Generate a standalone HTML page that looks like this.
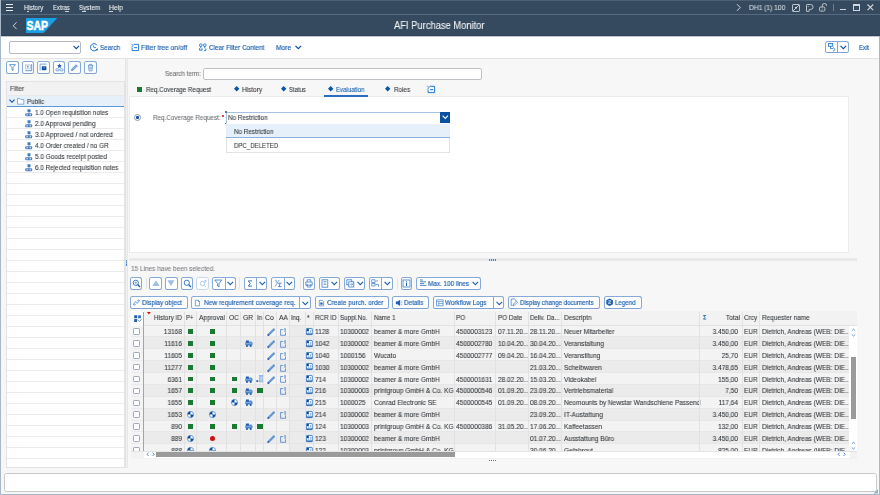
<!DOCTYPE html><html><head><meta charset="utf-8"><style>
*{margin:0;padding:0;box-sizing:border-box}
html,body{width:880px;height:495px;overflow:hidden}
body{position:relative;background:#f7f7f7;font-family:"Liberation Sans",sans-serif;color:#32363a;font-size:7px;line-height:1}
.a{position:absolute}
.t{position:absolute;white-space:nowrap;line-height:1;will-change:transform;-webkit-text-stroke:0.08px currentColor}
.btn{position:absolute;background:#fff;border:1px solid #86aad8;border-bottom:1.4px solid #7ea2d2;border-radius:2.5px}
.sep{position:absolute;width:1px;background:#e4e4e4}
.g{position:absolute;background:#1a7a32}
svg{position:absolute;overflow:visible}
</style></head><body>
<div class="a" style="left:0;top:0;width:880px;height:36px;background:#354a5f"></div>
<div class="a" style="left:0;top:14px;width:880px;height:1px;background:#566b7f"></div>
<div class="a" style="left:0;top:0;width:880px;height:1px;background:#4b5f73"></div>
<div class="a" style="left:0;top:35px;width:880px;height:1px;background:#2f4255"></div>
<div class="a" style="left:6px;top:4.3px;width:7.3px;height:1.2px;background:#e6eaee"></div>
<div class="a" style="left:6px;top:6.9px;width:7.3px;height:1.2px;background:#e6eaee"></div>
<div class="a" style="left:6px;top:9.5px;width:7.3px;height:1.2px;background:#e6eaee"></div>
<div class="t" style="left:23.6px;transform-origin:0 50%;top:5.00px;font-size:6.9px;color:#eef1f4;transform:scaleX(0.8996);">History</div>
<div class="t" style="left:52.7px;transform-origin:0 50%;top:5.00px;font-size:6.9px;color:#eef1f4;transform:scaleX(0.8602);">Extras</div>
<div class="t" style="left:79px;transform-origin:0 50%;top:5.00px;font-size:6.9px;color:#eef1f4;transform:scaleX(0.9180);">System</div>
<div class="t" style="left:109px;transform-origin:0 50%;top:5.00px;font-size:6.9px;color:#eef1f4;transform:scaleX(0.9879);">Help</div>
<div class="a" style="left:26.8px;top:11px;width:1.8px;height:0.8px;background:#c8d0d8"></div>
<div class="a" style="left:65.2px;top:11px;width:4.2px;height:0.8px;background:#c8d0d8"></div>
<div class="a" style="left:82px;top:11px;width:3.7px;height:0.8px;background:#c8d0d8"></div>
<div class="a" style="left:109.2px;top:11px;width:3.6px;height:0.8px;background:#c8d0d8"></div>
<svg style="left:736px;top:3px" width="6" height="9"><path d="M1 1.2 L4.2 4.5 L1 7.8" stroke="#cfd6de" stroke-width="1" fill="none"/></svg>
<div class="t" style="left:748.7px;transform-origin:0 50%;top:5.00px;font-size:6.9px;color:#d8dee4;transform:scaleX(0.9668);">DH1 (1) 100</div>
<svg style="left:792px;top:3.5px" width="9" height="9"><rect x="0.5" y="0.5" width="7" height="7" rx="0.6" stroke="#c9d1da" fill="none" stroke-width="0.9"/><path d="M1 7 L7 1" stroke="#c9d1da" stroke-width="0.9"/><path d="M2.6 3.2 L4.9 2.7 L4.4 5 Z" fill="#e3e8ed"/></svg>
<svg style="left:805.7px;top:3.5px" width="9" height="9"><path d="M0.5 7.1 V1.2 Q0.5 0.5 1.2 0.5 H4.6 Q7.1 0.5 7.1 3.1 Q7.1 5.4 4.6 5.4 H3.2 V7.1 Q3.2 7.4 2.9 7.4 H0.8 Q0.5 7.4 0.5 7.1 Z" stroke="#c9d1da" fill="none" stroke-width="0.9"/><circle cx="2.2" cy="2.4" r="0.5" fill="#c9d1da"/></svg>
<svg style="left:818.6px;top:2.8px" width="10" height="10"><rect x="0.5" y="4" width="5.4" height="4.1" rx="1.2" stroke="#c9d1da" fill="none" stroke-width="0.9"/><path d="M3.3 4 V2.4 Q3.3 0.5 5.4 0.5 Q7.5 0.5 7.5 2.4 V3" stroke="#c9d1da" fill="none" stroke-width="0.9"/><circle cx="3.2" cy="6" r="0.5" fill="#c9d1da"/></svg>
<div class="a" style="left:833px;top:4px;width:1px;height:6.5px;background:#6d8194"></div>
<div class="a" style="left:839.5px;top:9px;width:6.8px;height:1.3px;background:#cfd6de"></div>
<div class="a" style="left:853px;top:3.5px;width:7px;height:7px;border:1px solid #cfd6de;border-top-width:2px"></div>
<svg style="left:867px;top:4px" width="7" height="7"><path d="M0.5 0.5 L6.2 6.2 M6.2 0.5 L0.5 6.2" stroke="#cfd6de" stroke-width="1.1"/></svg>
<svg style="left:12px;top:22px" width="6" height="8"><path d="M4.6 0.3 L1.2 3.7 L4.6 7.1" stroke="#cfd6de" stroke-width="1" fill="none"/></svg>
<svg style="left:25.8px;top:18px" width="32" height="15"><path d="M0 0 H31.3 L17.6 15 H0 Z" fill="#1aa0e2"/><text x="0.6" y="12.25" font-family="Liberation Sans" font-weight="bold" font-size="12.9" fill="#fff" stroke="#fff" stroke-width="0.55" textLength="21.4" lengthAdjust="spacingAndGlyphs">SAP</text></svg>
<div class="t" style="left:393.9px;transform-origin:0 50%;top:21.00px;font-size:10px;color:#f3f5f7;transform:scaleX(0.9367);">AFI Purchase Monitor</div>
<div class="a" style="left:1px;top:36px;width:877.5px;height:23px;background:#fff;border-bottom:1px solid #e3e3e3"></div>
<div class="a" style="left:0;top:36px;width:880px;height:1px;background:#c3cad1"></div>
<div class="a" style="left:9px;top:41.2px;width:72px;height:12.6px;background:#fff;border:1px solid #b5b9bd;border-radius:2px"></div>
<svg style="left:72.6px;top:45.3px" width="7" height="5"><path d="M0.5 0.8 L3.3 3.7 L6.1 0.8" stroke="#0a4fa0" stroke-width="1.1" fill="none"/></svg>
<svg style="left:89.5px;top:43px" width="9" height="9"><path d="M7.1 2.3 A3.6 3.6 0 1 0 7.1 6.3" stroke="#0a6ed1" stroke-width="0.95" fill="none"/><path d="M7.9 5.2 L7.6 7.4 L5.6 6.9 Z" fill="#0a4fa0"/><path d="M3.2 2.4 L4.1 4.6 L5.9 4.6" stroke="#0a6ed1" stroke-width="0.85" fill="none"/></svg>
<div class="t" style="left:99.8px;transform-origin:0 50%;top:44.00px;font-size:7.2px;color:#1a5eae;transform:scaleX(0.8823);-webkit-text-stroke:0.16px currentColor;">Search</div>
<svg style="left:131px;top:43px" width="9" height="9"><path d="M0.5 0.9 L1.9 2.6 L0.5 4.3" stroke="#0a6ed1" stroke-width="0.85" fill="none"/><path d="M2.6 1.3 H7.6 V7.6 H1.1 V4.7 M3.1 4.6 H6" stroke="#0a6ed1" stroke-width="0.9" fill="none"/></svg>
<div class="t" style="left:141px;transform-origin:0 50%;top:44.00px;font-size:7.2px;color:#1a5eae;transform:scaleX(0.9180);-webkit-text-stroke:0.16px currentColor;">Filter tree on/off</div>
<svg style="left:198.5px;top:43px" width="9" height="9"><rect x="0.6" y="1" width="2.4" height="2.4" rx="0.6" stroke="#0a6ed1" stroke-width="0.85" fill="none"/><rect x="4.6" y="1" width="2.4" height="2.4" rx="0.6" stroke="#0a6ed1" stroke-width="0.85" fill="none"/><path d="M1.8 3.4 V5.2 M0.6 5.2 V7.2 H3 V5.2 M5.8 3.4 V5.2 M6.8 5.4 V7.6 H5" stroke="#0a6ed1" stroke-width="0.85" fill="none"/></svg>
<div class="t" style="left:208.6px;transform-origin:0 50%;top:44.00px;font-size:7.2px;color:#1a5eae;transform:scaleX(0.8904);-webkit-text-stroke:0.16px currentColor;">Clear Filter Content</div>
<div class="t" style="left:276px;transform-origin:0 50%;top:44.00px;font-size:7.2px;color:#1a5eae;transform:scaleX(0.9213);-webkit-text-stroke:0.16px currentColor;">More</div>
<svg style="left:294.5px;top:45px" width="7" height="5"><path d="M0.5 0.8 L3.3 3.7 L6.1 0.8" stroke="#0a4fa0" stroke-width="1.2" fill="none"/></svg>
<div class="btn" style="left:825px;top:41.2px;width:24px;height:12.2px"></div>
<div class="a" style="left:837px;top:41.7px;width:1px;height:11.2px;background:#7aa5d8"></div>
<svg style="left:827.5px;top:43px" width="9" height="9"><rect x="0.5" y="0.6" width="4.2" height="2.6" stroke="#0a6ed1" stroke-width="0.8" fill="none"/><path d="M2.5 3.2 V5.6 H5 M5 4.4 L7.2 6.5 L5 8.3" stroke="#0a6ed1" stroke-width="0.8" fill="none"/></svg>
<svg style="left:840px;top:45px" width="7" height="5"><path d="M0.5 0.8 L3.3 3.7 L6.1 0.8" stroke="#0a4fa0" stroke-width="1.1" fill="none"/></svg>
<div class="t" style="left:858.7px;transform-origin:0 50%;top:44.00px;font-size:7.2px;color:#1a5eae;transform:scaleX(0.8261);-webkit-text-stroke:0.16px currentColor;">Exit</div>
<div class="a" style="left:0;top:0;width:1px;height:495px;background:#a9b8c8"></div>
<div class="a" style="left:878.6px;top:36px;width:1.4px;height:459px;background:#a9b8c8"></div>
<div class="a" style="left:0;top:493.6px;width:880px;height:1.4px;background:#a9b8c8"></div>
<div class="btn" style="left:6px;top:61px;width:12.5px;height:12.7px"></div>
<div class="btn" style="left:21.9px;top:61px;width:12.5px;height:12.7px"></div>
<div class="btn" style="left:37.4px;top:61px;width:12.5px;height:12.7px"></div>
<div class="btn" style="left:52.9px;top:61px;width:12.5px;height:12.7px"></div>
<div class="btn" style="left:68.4px;top:61px;width:12.5px;height:12.7px"></div>
<div class="btn" style="left:84.2px;top:61px;width:12.5px;height:12.7px"></div>
<svg style="left:7.8px;top:62.8px" width="9" height="9"><path d="M1.5 1.6 H7.5 L5 4.6 V7.4 L4 6.8 V4.6 Z" stroke="#3a7cc8" stroke-width="0.75" fill="none"/></svg>
<svg style="left:23.7px;top:62.8px" width="9" height="9"><path d="M7.7 1.1 V7.7 H1.3" stroke="#3a7cc8" stroke-width="0.8" fill="none"/><rect x="1.3" y="1.9" width="5" height="4" stroke="#8db0dc" stroke-width="0.6" fill="none"/><path d="M3.8 2.8 V5 M3 3.6 L3.8 2.8 L4.6 3.6" stroke="#1d5eae" stroke-width="0.6" fill="none"/></svg>
<svg style="left:39.199999999999996px;top:62.8px" width="9" height="9"><path d="M1.1 7.7 V1.1 H7.6" stroke="#5a8fd0" stroke-width="0.8" fill="none"/><rect x="2.8" y="3.3" width="4.6" height="3.9" rx="0.4" fill="#0a4fa0"/><path d="M4.3 4.6 H5.9 L5.1 5.5 Z" fill="#fff"/></svg>
<svg style="left:54.699999999999996px;top:62.8px" width="9" height="9"><path d="M4.5 0.6 L5.2 2.1 L6.8 2.3 L5.6 3.4 L5.9 5 L4.5 4.2 L3.1 5 L3.4 3.4 L2.2 2.3 L3.8 2.1 Z" fill="#1d5eae"/><rect x="0.9" y="5.9" width="3" height="2" rx="0.5" stroke="#3a7cc8" stroke-width="0.65" fill="none"/><rect x="5.1" y="5.9" width="3" height="2" rx="0.5" stroke="#3a7cc8" stroke-width="0.65" fill="none"/></svg>
<svg style="left:70.2px;top:62.8px" width="9" height="9"><path d="M1.5 7.6 L2 5.8 L6 1.8 L7.3 3.1 L3.3 7.1 Z" stroke="#3a7cc8" stroke-width="0.75" fill="#9dbde4"/></svg>
<svg style="left:86.0px;top:62.8px" width="9" height="9"><path d="M1.8 2.3 H7.2 M3.6 2.3 V1.3 H5.4 V2.3 M2.5 2.3 L3 7.9 H6 L6.5 2.3 M3.9 3.6 V6.6 M5.1 3.6 V6.6" stroke="#3a7cc8" stroke-width="0.65" fill="none"/></svg>
<div class="a" style="left:6.3px;top:81.2px;width:118.7px;height:386.8px;background:#fff;border:1px solid #e3e3e3"></div>
<div class="a" style="left:124.9px;top:59px;width:3.4px;height:409px;background:#eef0f1;border-left:1px solid #e3e3e3;border-right:1px solid #e8e8e8"></div>
<div class="a" style="left:7.1px;top:81.7px;width:117.4px;height:13.9px;background:#f2f2f2;border-bottom:1px solid #e8e8e8"></div>
<div class="t" style="left:9.9px;transform-origin:0 50%;top:86.00px;font-size:6.9px;color:#3e4246;transform:scaleX(0.9208);">Filter</div>
<div class="a" style="left:7.1px;top:95.6px;width:117.4px;height:11.2px;background:#e5f0fa;border-bottom:1px solid #5e96d2"></div>
<svg style="left:8.9px;top:99px" width="7" height="5"><path d="M0.5 0.7 L3 3.3 L5.5 0.7" stroke="#0a4fa0" stroke-width="1.1" fill="none"/></svg>
<svg style="left:17px;top:98px" width="8" height="7"><path d="M0.5 0.5 H3 L3.8 1.5 H6.8 V6.2 H0.5 Z" stroke="#6d9fd6" stroke-width="0.8" fill="#fafcff"/></svg>
<div class="t" style="left:26.6px;transform-origin:0 50%;top:99.00px;font-size:6.9px;color:#32363a;transform:scaleX(0.9105);">Public</div>
<div class="a" style="left:7.1px;top:117px;width:117.4px;height:1px;background:#ebebeb"></div>
<div class="a" style="left:7.1px;top:128px;width:117.4px;height:1px;background:#ebebeb"></div>
<div class="a" style="left:7.1px;top:139px;width:117.4px;height:1px;background:#ebebeb"></div>
<div class="a" style="left:7.1px;top:150px;width:117.4px;height:1px;background:#ebebeb"></div>
<div class="a" style="left:7.1px;top:161px;width:117.4px;height:1px;background:#ebebeb"></div>
<div class="a" style="left:7.1px;top:172px;width:117.4px;height:1px;background:#ebebeb"></div>
<div class="a" style="left:7.1px;top:183px;width:117.4px;height:1px;background:#ebebeb"></div>
<div class="a" style="left:7.1px;top:194px;width:117.4px;height:1px;background:#ebebeb"></div>
<div class="a" style="left:7.1px;top:205px;width:117.4px;height:1px;background:#ebebeb"></div>
<div class="a" style="left:7.1px;top:216px;width:117.4px;height:1px;background:#ebebeb"></div>
<div class="a" style="left:7.1px;top:227px;width:117.4px;height:1px;background:#ebebeb"></div>
<div class="a" style="left:7.1px;top:238px;width:117.4px;height:1px;background:#ebebeb"></div>
<div class="a" style="left:7.1px;top:249px;width:117.4px;height:1px;background:#ebebeb"></div>
<div class="a" style="left:7.1px;top:260px;width:117.4px;height:1px;background:#ebebeb"></div>
<div class="a" style="left:7.1px;top:271px;width:117.4px;height:1px;background:#ebebeb"></div>
<div class="a" style="left:7.1px;top:282px;width:117.4px;height:1px;background:#ebebeb"></div>
<div class="a" style="left:7.1px;top:293px;width:117.4px;height:1px;background:#ebebeb"></div>
<div class="a" style="left:7.1px;top:304px;width:117.4px;height:1px;background:#ebebeb"></div>
<div class="a" style="left:7.1px;top:315px;width:117.4px;height:1px;background:#ebebeb"></div>
<div class="a" style="left:7.1px;top:326px;width:117.4px;height:1px;background:#ebebeb"></div>
<div class="a" style="left:7.1px;top:337px;width:117.4px;height:1px;background:#ebebeb"></div>
<div class="a" style="left:7.1px;top:348px;width:117.4px;height:1px;background:#ebebeb"></div>
<div class="a" style="left:7.1px;top:359px;width:117.4px;height:1px;background:#ebebeb"></div>
<div class="a" style="left:7.1px;top:370px;width:117.4px;height:1px;background:#ebebeb"></div>
<div class="a" style="left:7.1px;top:381px;width:117.4px;height:1px;background:#ebebeb"></div>
<div class="a" style="left:7.1px;top:392px;width:117.4px;height:1px;background:#ebebeb"></div>
<div class="a" style="left:7.1px;top:403px;width:117.4px;height:1px;background:#ebebeb"></div>
<div class="a" style="left:7.1px;top:414px;width:117.4px;height:1px;background:#ebebeb"></div>
<div class="a" style="left:7.1px;top:425px;width:117.4px;height:1px;background:#ebebeb"></div>
<div class="a" style="left:7.1px;top:436px;width:117.4px;height:1px;background:#ebebeb"></div>
<div class="a" style="left:7.1px;top:447px;width:117.4px;height:1px;background:#ebebeb"></div>
<div class="a" style="left:7.1px;top:458px;width:117.4px;height:1px;background:#ebebeb"></div>
<svg style="left:25px;top:108.89999999999999px" width="8" height="8"><path d="M2.5 0.2 H5.5 V2.3 L4 3.7 L2.5 2.3 Z" fill="#3d7bc6"/><path d="M4 3.5 V4.5" stroke="#3d7bc6" stroke-width="0.7"/><rect x="0.2" y="4.3" width="7" height="3" rx="1" fill="#4a82c4"/><rect x="1.4" y="5.3" width="1.3" height="1" fill="#fff"/><rect x="4.7" y="5.3" width="1.3" height="1" fill="#fff"/></svg>
<div class="t" style="left:34.5px;transform-origin:0 50%;top:110.00px;font-size:6.9px;color:#32363a;transform:scaleX(0.9098);">1.0 Open requisition notes</div>
<svg style="left:25px;top:119.89999999999999px" width="8" height="8"><path d="M2.5 0.2 H5.5 V2.3 L4 3.7 L2.5 2.3 Z" fill="#3d7bc6"/><path d="M4 3.5 V4.5" stroke="#3d7bc6" stroke-width="0.7"/><rect x="0.2" y="4.3" width="7" height="3" rx="1" fill="#4a82c4"/><rect x="1.4" y="5.3" width="1.3" height="1" fill="#fff"/><rect x="4.7" y="5.3" width="1.3" height="1" fill="#fff"/></svg>
<div class="t" style="left:34.5px;transform-origin:0 50%;top:121.00px;font-size:6.9px;color:#32363a;transform:scaleX(0.9359);">2.0 Approval pending</div>
<svg style="left:25px;top:130.9px" width="8" height="8"><path d="M2.5 0.2 H5.5 V2.3 L4 3.7 L2.5 2.3 Z" fill="#3d7bc6"/><path d="M4 3.5 V4.5" stroke="#3d7bc6" stroke-width="0.7"/><rect x="0.2" y="4.3" width="7" height="3" rx="1" fill="#4a82c4"/><rect x="1.4" y="5.3" width="1.3" height="1" fill="#fff"/><rect x="4.7" y="5.3" width="1.3" height="1" fill="#fff"/></svg>
<div class="t" style="left:34.5px;transform-origin:0 50%;top:132.00px;font-size:6.9px;color:#32363a;transform:scaleX(0.9533);">3.0 Approved / not ordered</div>
<svg style="left:25px;top:141.9px" width="8" height="8"><path d="M2.5 0.2 H5.5 V2.3 L4 3.7 L2.5 2.3 Z" fill="#3d7bc6"/><path d="M4 3.5 V4.5" stroke="#3d7bc6" stroke-width="0.7"/><rect x="0.2" y="4.3" width="7" height="3" rx="1" fill="#4a82c4"/><rect x="1.4" y="5.3" width="1.3" height="1" fill="#fff"/><rect x="4.7" y="5.3" width="1.3" height="1" fill="#fff"/></svg>
<div class="t" style="left:34.5px;transform-origin:0 50%;top:143.00px;font-size:6.9px;color:#32363a;transform:scaleX(0.9250);">4.0 Order created / no GR</div>
<svg style="left:25px;top:152.9px" width="8" height="8"><path d="M2.5 0.2 H5.5 V2.3 L4 3.7 L2.5 2.3 Z" fill="#3d7bc6"/><path d="M4 3.5 V4.5" stroke="#3d7bc6" stroke-width="0.7"/><rect x="0.2" y="4.3" width="7" height="3" rx="1" fill="#4a82c4"/><rect x="1.4" y="5.3" width="1.3" height="1" fill="#fff"/><rect x="4.7" y="5.3" width="1.3" height="1" fill="#fff"/></svg>
<div class="t" style="left:34.5px;transform-origin:0 50%;top:154.00px;font-size:6.9px;color:#32363a;transform:scaleX(0.9338);">5.0 Goods receipt posted</div>
<svg style="left:25px;top:163.9px" width="8" height="8"><path d="M2.5 0.2 H5.5 V2.3 L4 3.7 L2.5 2.3 Z" fill="#3d7bc6"/><path d="M4 3.5 V4.5" stroke="#3d7bc6" stroke-width="0.7"/><rect x="0.2" y="4.3" width="7" height="3" rx="1" fill="#4a82c4"/><rect x="1.4" y="5.3" width="1.3" height="1" fill="#fff"/><rect x="4.7" y="5.3" width="1.3" height="1" fill="#fff"/></svg>
<div class="t" style="left:34.5px;transform-origin:0 50%;top:165.00px;font-size:6.9px;color:#32363a;transform:scaleX(0.9185);">6.0 Rejected requisition notes</div>
<div class="a" style="left:129.3px;top:96px;width:719.6px;height:156.5px;background:#fff;border:1px solid #ebebeb"></div>
<div class="t" style="left:164.7px;transform-origin:0 50%;top:71.00px;font-size:6.9px;color:#6a6d70;transform:scaleX(0.9099);">Search term:</div>
<div class="a" style="left:203.2px;top:67.6px;width:278.6px;height:12px;background:#fff;border:1px solid #bfc3c7;border-radius:2px"></div>
<div class="a" style="left:136.5px;top:86.8px;width:5.6px;height:5px;background:#1a7a32"></div>
<div class="t" style="left:145.6px;transform-origin:0 50%;top:87.00px;font-size:6.9px;color:#32363a;transform:scaleX(0.9054);">Req.Coverage Request</div>
<svg style="left:233.55px;top:86.4px" width="6" height="6"><path d="M2.7 0 L5.4 2.7 L2.7 5.4 L0 2.7 Z" fill="#0a55a8"/></svg>
<div class="t" style="left:241.95px;transform-origin:0 50%;top:87.00px;font-size:6.9px;color:#32363a;transform:scaleX(0.9369);">History</div>
<svg style="left:281.05px;top:86.4px" width="6" height="6"><path d="M2.7 0 L5.4 2.7 L2.7 5.4 L0 2.7 Z" fill="#0a55a8"/></svg>
<div class="t" style="left:289.45px;transform-origin:0 50%;top:87.00px;font-size:6.9px;color:#32363a;transform:scaleX(0.8620);">Status</div>
<svg style="left:328.0px;top:86.4px" width="6" height="6"><path d="M2.7 0 L5.4 2.7 L2.7 5.4 L0 2.7 Z" fill="#0a55a8"/></svg>
<div class="t" style="left:336.4px;transform-origin:0 50%;top:87.00px;font-size:6.9px;color:#0b5cad;transform:scaleX(0.8854);">Evaluation</div>
<svg style="left:385.3px;top:86.4px" width="6" height="6"><path d="M2.7 0 L5.4 2.7 L2.7 5.4 L0 2.7 Z" fill="#0a55a8"/></svg>
<div class="t" style="left:393.7px;transform-origin:0 50%;top:87.00px;font-size:6.9px;color:#32363a;transform:scaleX(0.9191);">Roles</div>
<div class="a" style="left:323.8px;top:95.3px;width:44.2px;height:1.7px;background:#2b6cbc"></div>
<svg style="left:427px;top:85.3px" width="9" height="9"><path d="M0.5 0.9 L1.9 2.6 L0.5 4.3" stroke="#0a6ed1" stroke-width="0.85" fill="none"/><path d="M2.6 1.3 H7.6 V7.6 H1.1 V4.7 M3.1 4.6 H6" stroke="#0a6ed1" stroke-width="0.9" fill="none"/></svg>
<div class="a" style="left:133.6px;top:113.6px;width:7.4px;height:7.4px;border:0.8px solid #8a9bb0;border-radius:50%;background:#fff"></div>
<div class="a" style="left:136px;top:116px;width:2.6px;height:2.6px;border-radius:50%;background:#0a4fa0"></div>
<div class="t" style="left:153px;transform-origin:0 50%;top:115.00px;font-size:6.9px;color:#6a6d70;transform:scaleX(0.9143);">Req.Coverage Request:</div>
<div class="a" style="left:222.2px;top:115.4px;width:2px;height:1.8px;border-radius:40%;background:#d8202a"></div>
<div class="a" style="left:225.8px;top:111.6px;width:224px;height:12px;background:#fff;border:1.3px solid #a3c2e5;border-left-width:1px"></div>
<div class="a" style="left:225.3px;top:111.2px;width:1.6px;height:1.6px;background:#6a7580"></div>
<div class="a" style="left:225.3px;top:122.6px;width:1.6px;height:1.6px;background:#6a7580"></div>
<div class="t" style="left:228.3px;transform-origin:0 50%;top:115.00px;font-size:6.9px;color:#32363a;transform:scaleX(0.9149);">No Restriction</div>
<div class="a" style="left:440.4px;top:112.4px;width:9.4px;height:10.6px;background:#0a4fa0"></div>
<svg style="left:441.8px;top:115.3px" width="7" height="5"><path d="M0.6 0.7 L3.3 3.4 L6 0.7" stroke="#fff" stroke-width="1.1" fill="none"/></svg>
<div class="a" style="left:226.2px;top:123.4px;width:223.6px;height:30px;background:#fff;border:1px solid #e2e2e2;border-top:none"></div>
<div class="a" style="left:226.2px;top:123.5px;width:223.6px;height:14.6px;background:#e5f0fa;border-bottom:1.2px solid #8ab2de"></div>
<div class="t" style="left:233.7px;transform-origin:0 50%;top:129.00px;font-size:6.9px;color:#32363a;transform:scaleX(0.9126);">No Restriction</div>
<div class="t" style="left:233.7px;transform-origin:0 50%;top:143.00px;font-size:6.9px;color:#32363a;transform:scaleX(0.8810);">DPC_DELETED</div>
<div class="a" style="left:129.3px;top:258px;width:728px;height:3px;background:linear-gradient(#eceef0,#e4e6e8 50%,#eceef0)"></div>
<div class="a" style="left:488.8px;top:259px;width:7.4px;height:1.5px;background:repeating-linear-gradient(90deg,#4d86c9 0 1.3px,#c9d9ec 1.3px 2px)"></div>
<div class="a" style="left:125.8px;top:259.8px;width:1px;height:6.6px;background:repeating-linear-gradient(180deg,#4a84c8 0 1.4px,#9fbee2 1.4px 1.8px)"></div>
<div class="t" style="left:130.6px;transform-origin:0 50%;top:266.00px;font-size:6.9px;color:#7a7d80;transform:scaleX(0.9369);">15 Lines have been selected.</div>
<div class="btn" style="left:130.1px;top:277.3px;width:12px;height:12.5px"></div>
<svg style="left:132px;top:279.1px" width="9" height="9"><circle cx="3.8" cy="3.8" r="2.6" stroke="#3a7cc8" stroke-width="1" fill="none"/><path d="M5.6 5.6 L8 8" stroke="#1d5eae" stroke-width="1.4"/><path d="M2.6 3.8 H5 M3.8 2.6 V5" stroke="#3a7cc8" stroke-width="0.6"/></svg>
<div class="sep" style="left:145.8px;top:278px;height:11px"></div>
<div class="btn" style="left:149.4px;top:277.3px;width:12.3px;height:12.5px"></div>
<svg style="left:151.5px;top:279.3px" width="9" height="9"><path d="M4 1.3 L7.6 7 H0.4 Z" fill="#9dbfe6"/></svg>
<div class="btn" style="left:165.3px;top:277.3px;width:12.3px;height:12.5px"></div>
<svg style="left:167.4px;top:279.3px" width="9" height="9"><path d="M4 7 L7.6 1.3 H0.4 Z" fill="#9dbfe6"/></svg>
<div class="btn" style="left:181.1px;top:277.3px;width:12px;height:12.5px"></div>
<svg style="left:183px;top:279.1px" width="9" height="9"><circle cx="3.8" cy="3.8" r="2.6" stroke="#3a7cc8" stroke-width="1" fill="none"/><path d="M5.6 5.6 L8 8" stroke="#1d5eae" stroke-width="1.3"/></svg>
<div class="btn" style="left:196.4px;top:277.3px;width:12.3px;height:12.5px;border-color:#c3d6ec"></div>
<svg style="left:198.5px;top:279.1px" width="9" height="9"><circle cx="3.5" cy="4.5" r="2.2" stroke="#9dbfe6" stroke-width="0.8" fill="none"/><path d="M5 6 L7 8 M6.5 0.5 V3.5 M5 2 H8" stroke="#9dbfe6" stroke-width="0.7"/></svg>
<div class="btn" style="left:212.2px;top:277.3px;width:23.8px;height:12.5px"></div>
<div class="a" style="left:224.7px;top:277.8px;width:1px;height:11.5px;background:#86aad8"></div>
<svg style="left:214px;top:279.1px" width="9" height="9"><path d="M0.8 1 H7.8 L5 4.5 V8 L3.6 7 V4.5 Z" stroke="#3a7cc8" stroke-width="0.85" fill="none"/></svg>
<svg style="left:226.8px;top:281.3px" width="7" height="5"><path d="M0.5 0.8 L3.3 3.6 L6.1 0.8" stroke="#1d5eae" stroke-width="1.1" fill="none"/></svg>
<div class="sep" style="left:238.9px;top:278px;height:11px"></div>
<div class="btn" style="left:243.6px;top:277.3px;width:23.9px;height:12.5px"></div>
<div class="a" style="left:256.2px;top:277.8px;width:1px;height:11.5px;background:#86aad8"></div>
<svg style="left:246.2px;top:279.1px" width="9" height="9"><path d="M6 1.9 H2.3 L4.2 4.5 L2.3 7.1 H6" stroke="#1d5eae" stroke-width="0.85" fill="none"/></svg>
<svg style="left:258.6px;top:281.3px" width="7" height="5"><path d="M0.5 0.8 L3.3 3.6 L6.1 0.8" stroke="#1d5eae" stroke-width="1.1" fill="none"/></svg>
<div class="btn" style="left:271.3px;top:277.3px;width:24.2px;height:12.5px"></div>
<div class="a" style="left:283.6px;top:277.8px;width:1px;height:11.5px;background:#86aad8"></div>
<svg style="left:273.6px;top:279.1px" width="9" height="9"><path d="M1.2 1.2 H2.2 V3.6 M1 7.5 L5.2 1" stroke="#3a7cc8" stroke-width="0.7" fill="none"/><path d="M7.6 4.2 H4.6 L6 5.9 L4.6 7.6 H7.6" stroke="#1d5eae" stroke-width="0.75" fill="none"/></svg>
<svg style="left:286px;top:281.3px" width="7" height="5"><path d="M0.5 0.8 L3.3 3.6 L6.1 0.8" stroke="#1d5eae" stroke-width="1.1" fill="none"/></svg>
<div class="sep" style="left:299.6px;top:278px;height:11px"></div>
<div class="btn" style="left:303.3px;top:277.3px;width:11.3px;height:12.5px"></div>
<svg style="left:304.8px;top:279.1px" width="9" height="9"><path d="M2.2 2.8 V0.8 H5.8 V2.8 M0.8 3 H7.2 V6.2 H0.8 Z M2.2 5 V8 H5.8 V5" stroke="#3a7cc8" stroke-width="0.8" fill="none"/></svg>
<div class="btn" style="left:318.7px;top:277.3px;width:21.1px;height:12.5px"></div>
<svg style="left:320.5px;top:279.1px" width="9" height="9"><rect x="1" y="0.8" width="5.8" height="7.4" stroke="#3a7cc8" stroke-width="0.8" fill="none"/><path d="M2.5 2.5 H5.3 M2.5 4 H5.3 M2.5 5.5 H5.3" stroke="#3a7cc8" stroke-width="0.6"/></svg>
<svg style="left:331px;top:281.3px" width="7" height="5"><path d="M0.5 0.8 L3.3 3.6 L6.1 0.8" stroke="#1d5eae" stroke-width="1.1" fill="none"/></svg>
<div class="btn" style="left:343.7px;top:277.3px;width:21.5px;height:12.5px"></div>
<svg style="left:345.5px;top:279.1px" width="9" height="9"><rect x="0.8" y="0.8" width="5" height="5" stroke="#3a7cc8" stroke-width="0.8" fill="none"/><rect x="2.8" y="2.8" width="5" height="5.2" stroke="#3a7cc8" stroke-width="0.8" fill="#fff"/><path d="M4 5.3 H6.8 M5.5 4 L6.8 5.3 L5.5 6.6" stroke="#3a7cc8" stroke-width="0.6" fill="none"/></svg>
<svg style="left:356.5px;top:281.3px" width="7" height="5"><path d="M0.5 0.8 L3.3 3.6 L6.1 0.8" stroke="#1d5eae" stroke-width="1.1" fill="none"/></svg>
<div class="btn" style="left:369px;top:277.3px;width:23.5px;height:12.5px"></div>
<div class="a" style="left:381.2px;top:277.8px;width:1px;height:11.5px;background:#86aad8"></div>
<svg style="left:371px;top:279.1px" width="9" height="9"><rect x="0.8" y="0.8" width="3.2" height="2.6" stroke="#3a7cc8" stroke-width="0.7" fill="none"/><rect x="0.8" y="4.4" width="3.2" height="2.6" stroke="#3a7cc8" stroke-width="0.7" fill="none"/><path d="M4.5 2 H7 M4.5 5.5 H7.5 V7.8" stroke="#3a7cc8" stroke-width="0.7" fill="none"/></svg>
<svg style="left:383.6px;top:281.3px" width="7" height="5"><path d="M0.5 0.8 L3.3 3.6 L6.1 0.8" stroke="#1d5eae" stroke-width="1.1" fill="none"/></svg>
<div class="sep" style="left:396.7px;top:278px;height:11px"></div>
<div class="btn" style="left:400.5px;top:277.3px;width:11.9px;height:12.5px"></div>
<svg style="left:402px;top:279.1px" width="9" height="9"><rect x="1" y="1" width="7" height="7" stroke="#3a7cc8" stroke-width="0.8" fill="none"/><path d="M4.5 3.5 V7 M4.5 2 V2.6" stroke="#1d5eae" stroke-width="1"/></svg>
<div class="btn" style="left:416.3px;top:277.3px;width:65.1px;height:12.5px"></div>
<svg style="left:418.5px;top:279.1px" width="9" height="9"><path d="M1 1 H4 M1 2.8 H7 M1 4.6 H5 M1 6.4 H7.5" stroke="#3a7cc8" stroke-width="0.9"/></svg>
<div class="t" style="left:428px;transform-origin:0 50%;top:280.00px;font-size:7.2px;color:#1a5eae;transform:scaleX(0.8847);-webkit-text-stroke:0.16px currentColor;">Max. 100 lines</div>
<svg style="left:472px;top:281.3px" width="7" height="5"><path d="M0.5 0.8 L3.3 3.6 L6.1 0.8" stroke="#1d5eae" stroke-width="1.1" fill="none"/></svg>
<div class="btn" style="left:130px;top:296.3px;width:57.5px;height:12.7px"></div>
<svg style="left:132.5px;top:298.8px" width="9" height="9"><g transform="scale(0.86)"><path d="M3.4 5.6 L2.2 6.8 Q1 7.6 0.6 6.6 Q0.2 5.8 1.2 5 L3 3.4 Q3.8 3 4.2 3.8 M4.6 2.6 L5.8 1.4 Q6.8 0.6 7.3 1.5 Q7.6 2.3 6.8 3 L5 4.6 Q4.2 5 3.8 4.2" stroke="#3a7cc8" stroke-width="0.95" fill="none"/></g></svg>
<div class="t" style="left:141.9px;transform-origin:0 50%;top:299.00px;font-size:7.2px;color:#1a5eae;transform:scaleX(0.8939);-webkit-text-stroke:0.16px currentColor;">Display object</div>
<div class="btn" style="left:191.3px;top:296.3px;width:120px;height:12.7px"></div>
<div class="a" style="left:299.3px;top:296.8px;width:1px;height:11.7px;background:#86aad8"></div>
<svg style="left:194px;top:298.7px" width="9" height="9"><g transform="scale(0.86)"><path d="M1.5 1.5 H5 L6.5 3 V8 H1.5 Z M5 1.5 V3 H6.5" stroke="#3a7cc8" stroke-width="0.8" fill="none"/></g></svg>
<div class="t" style="left:203.8px;transform-origin:0 50%;top:299.00px;font-size:7.2px;color:#1a5eae;transform:scaleX(0.9097);-webkit-text-stroke:0.16px currentColor;">New requirement coverage req.</div>
<svg style="left:302px;top:300.5px" width="7" height="5"><path d="M0.5 0.8 L3.3 3.6 L6.1 0.8" stroke="#1d5eae" stroke-width="1.1" fill="none"/></svg>
<div class="btn" style="left:314.9px;top:296.3px;width:73.7px;height:12.7px"></div>
<svg style="left:317.5px;top:298.7px" width="9" height="9"><g transform="scale(0.86)"><path d="M1.5 1.5 H5 L6.5 3 V8 H1.5 Z" stroke="#3a7cc8" stroke-width="0.8" fill="none"/><rect x="2.7" y="4" width="2.6" height="2.6" fill="#1d5eae"/></g></svg>
<div class="t" style="left:327.2px;transform-origin:0 50%;top:299.00px;font-size:7.2px;color:#1a5eae;transform:scaleX(0.9049);-webkit-text-stroke:0.16px currentColor;">Create purch. order</div>
<div class="btn" style="left:392.3px;top:296.3px;width:36.8px;height:12.7px"></div>
<svg style="left:394.5px;top:298.7px" width="9" height="9"><g transform="scale(0.86)"><path d="M1 3 H3 L6 1 V8 L3 6 H1 Z" fill="#1d5eae"/><path d="M7 3 L8.5 2 M7 4.5 H8.5 M7 6 L8.5 7" stroke="#3a7cc8" stroke-width="0.6"/></g></svg>
<div class="t" style="left:404.4px;transform-origin:0 50%;top:299.00px;font-size:7.2px;color:#1a5eae;transform:scaleX(0.8733);-webkit-text-stroke:0.16px currentColor;">Details</div>
<div class="btn" style="left:433.4px;top:296.3px;width:70.7px;height:12.7px"></div>
<div class="a" style="left:492.7px;top:296.8px;width:1px;height:11.7px;background:#86aad8"></div>
<svg style="left:436px;top:298.7px" width="9" height="9"><g transform="scale(0.86)"><rect x="0.8" y="1" width="7.4" height="7" stroke="#3a7cc8" stroke-width="0.8" fill="none"/><path d="M0.8 3 H8.2 M3.2 3 V8 M3.2 5.3 H8.2" stroke="#3a7cc8" stroke-width="0.7"/></g></svg>
<div class="t" style="left:444.8px;transform-origin:0 50%;top:299.00px;font-size:7.2px;color:#1a5eae;transform:scaleX(0.8784);-webkit-text-stroke:0.16px currentColor;">Workflow Logs</div>
<svg style="left:495.5px;top:300.5px" width="7" height="5"><path d="M0.5 0.8 L3.3 3.6 L6.1 0.8" stroke="#1d5eae" stroke-width="1.1" fill="none"/></svg>
<div class="btn" style="left:508px;top:296.3px;width:91.6px;height:12.7px"></div>
<svg style="left:509.8px;top:298.1px" width="9" height="9"><path d="M1.2 7.4 V1 H4.6 L6 2.4 V3.4 M1.2 7.4 H2.4" stroke="#3a7cc8" stroke-width="0.75" fill="none"/><path d="M3 7.8 L3.4 6.1 L6.4 3.1 L7.5 4.2 L4.5 7.2 Z" stroke="#3a7cc8" stroke-width="0.75" fill="none"/></svg>
<div class="t" style="left:519.9px;transform-origin:0 50%;top:299.00px;font-size:7.2px;color:#1a5eae;transform:scaleX(0.8539);-webkit-text-stroke:0.16px currentColor;">Display change documents</div>
<div class="btn" style="left:603.7px;top:296.3px;width:37.9px;height:12.7px"></div>
<svg style="left:606.2px;top:298.1px" width="9" height="9"><path d="M3.6 0.5 L6.9 2.2 V6.2 L3.6 7.9 L0.3 6.2 V2.2 Z" fill="#1d5eae"/><path d="M2.3 2.9 H4.8 L2.3 5.3 H5" stroke="#fff" stroke-width="0.75" fill="none"/></svg>
<div class="t" style="left:615.4px;transform-origin:0 50%;top:299.00px;font-size:7.2px;color:#1a5eae;transform:scaleX(0.8547);-webkit-text-stroke:0.16px currentColor;">Legend</div>
<div class="a" style="left:130.6px;top:310.6px;width:726.6px;height:148.59999999999997px;background:#f2f2f2;border:1px solid #e0e0e0"></div>
<div class="a" style="left:131.1px;top:311.1px;width:725.6px;height:14.5px;background:#f2f2f2;border-bottom:1px solid #e2e2e2"></div>
<div class="a" style="left:131.1px;top:311.1px;width:12.5px;height:14.5px;background:#fff"></div>
<div class="a" style="left:0;top:0;width:849.4px;height:451.30px;overflow:hidden">
<div class="a" style="left:131.1px;top:325.60px;width:718.30px;height:11.875px;background:#f3f3f3;border-bottom:1px solid #e7e7e7"></div>
<div class="a" style="left:131.1px;top:325.60px;width:12.5px;height:11.875px;background:#f4f4f4;border-bottom:1px solid #ebebeb"></div>
<div class="a" style="left:133.30px;top:328.30px;width:6.9px;height:6.5px;background:#fbfdff;border:0.8px solid #a3a9bb;border-radius:1.2px"></div>
<div class="a" style="left:288.80px;top:325.60px;width:16.20px;height:11.875px;background:#ebebeb;border-bottom:1px solid #e4e4e4"></div>
<div class="t" style="left:-18.19999999999999px;width:200px;text-align:right;transform-origin:100% 50%;top:329.00px;font-size:6.9px;color:#32363a;transform:scaleX(0.9480);">13168</div>
<div class="g" style="left:188.10px;top:329.04px;width:5.4px;height:4.9px"></div>
<div class="g" style="left:209.70px;top:329.04px;width:5.4px;height:4.9px"></div>
<svg style="left:266.80px;top:328.14px" width="8" height="8"><path d="M1.3 6.9 L6.8 1.4" stroke="#5089cb" stroke-width="2.1" stroke-linecap="round"/><path d="M1.6 6.6 L6.6 1.6" stroke="#a9c6ea" stroke-width="0.45"/><circle cx="1.3" cy="6.9" r="0.75" fill="#1d5eae"/></svg>
<svg style="left:280.40px;top:327.94px" width="7" height="8"><path d="M2.8 1.5 H0.6 V7.3 H5.5 V4.4" stroke="#4a82c6" stroke-width="0.8" fill="none"/><path d="M5.1 0.2 V3.8" stroke="#4a82c6" stroke-width="1"/><path d="M3.4 1.6 L5 0.4" stroke="#7ea6d8" stroke-width="0.6"/></svg>
<svg style="left:305.70px;top:327.84px" width="8" height="8"><rect x="0.45" y="0.45" width="5.8" height="6.2" rx="0.5" fill="#fff" stroke="#3d7bc6" stroke-width="0.9"/><rect x="0.9" y="0.9" width="2" height="2.3" fill="#0a4fa0"/><rect x="2" y="3.6" width="1.2" height="1.2" fill="#7fa8da"/><rect x="4" y="2" width="1" height="2.8" fill="#9dbde4"/><rect x="0.3" y="5.4" width="6.1" height="1.3" fill="#2c66b0"/></svg>
<div class="t" style="left:315.2px;transform-origin:0 50%;top:329.00px;font-size:6.9px;color:#32363a;transform:scaleX(0.9480);">1128</div>
<div class="t" style="left:340.4px;transform-origin:0 50%;top:329.00px;font-size:6.9px;color:#32363a;transform:scaleX(0.9480);">10300002</div>
<div class="t" style="left:373.8px;transform-origin:0 50%;top:329.00px;font-size:6.9px;color:#32363a;transform:scaleX(0.9480);">beamer &amp; more GmbH</div>
<div class="t" style="left:456.4px;transform-origin:0 50%;top:329.00px;font-size:6.9px;color:#32363a;transform:scaleX(0.9480);">4500003123</div>
<div class="t" style="left:497.8px;transform-origin:0 50%;top:329.00px;font-size:6.9px;color:#32363a;transform:scaleX(0.9480);">07.11.20...</div>
<div class="t" style="left:530.3000000000001px;transform-origin:0 50%;top:329.00px;font-size:6.9px;color:#32363a;transform:scaleX(0.9480);">28.11.20...</div>
<div class="t" style="left:563.9000000000001px;transform-origin:0 50%;top:329.00px;font-size:6.9px;color:#32363a;transform:scaleX(0.9480);">Neuer Mitarbeiter</div>
<div class="t" style="left:537.9px;width:200px;text-align:right;transform-origin:100% 50%;top:329.00px;font-size:6.9px;color:#32363a;transform:scaleX(0.9480);">3.450,00</div>
<div class="t" style="left:744.0px;transform-origin:0 50%;top:329.00px;font-size:6.9px;color:#32363a;transform:scaleX(0.9480);">EUR</div>
<div class="t" style="left:761.8000000000001px;transform-origin:0 50%;top:329.00px;font-size:6.9px;color:#32363a;transform:scaleX(0.9480);">Dietrich, Andreas (WEB: DIE...</div>
<div class="a" style="left:131.1px;top:337.48px;width:718.30px;height:11.875px;background:#ebebeb;border-bottom:1px solid #e7e7e7"></div>
<div class="a" style="left:131.1px;top:337.48px;width:12.5px;height:11.875px;background:#f4f4f4;border-bottom:1px solid #ebebeb"></div>
<div class="a" style="left:133.30px;top:340.18px;width:6.9px;height:6.5px;background:#fbfdff;border:0.8px solid #a3a9bb;border-radius:1.2px"></div>
<div class="a" style="left:288.80px;top:337.48px;width:16.20px;height:11.875px;background:#ebebeb;border-bottom:1px solid #e4e4e4"></div>
<div class="t" style="left:-18.19999999999999px;width:200px;text-align:right;transform-origin:100% 50%;top:341.00px;font-size:6.9px;color:#32363a;transform:scaleX(0.9480);">11616</div>
<div class="g" style="left:188.10px;top:340.91px;width:5.4px;height:4.9px"></div>
<div class="g" style="left:209.70px;top:340.91px;width:5.4px;height:4.9px"></div>
<svg style="left:245.00px;top:340.11px" width="8" height="8"><rect x="0.3" y="1.9" width="7.2" height="3.5" rx="1" fill="#4a82c6"/><rect x="0.9" y="0.5" width="3" height="1.9" fill="#1d5eae"/><rect x="4.3" y="1" width="2.2" height="1.3" fill="#9fc0e6"/><path d="M1 3.6 H6.6" stroke="#b9d0ee" stroke-width="0.5"/><circle cx="2" cy="6" r="1.05" fill="#1d5eae"/><circle cx="5.7" cy="6" r="1.05" fill="#1d5eae"/></svg>
<svg style="left:266.80px;top:340.01px" width="8" height="8"><path d="M1.3 6.9 L6.8 1.4" stroke="#5089cb" stroke-width="2.1" stroke-linecap="round"/><path d="M1.6 6.6 L6.6 1.6" stroke="#a9c6ea" stroke-width="0.45"/><circle cx="1.3" cy="6.9" r="0.75" fill="#1d5eae"/></svg>
<svg style="left:280.40px;top:339.81px" width="7" height="8"><path d="M2.8 1.5 H0.6 V7.3 H5.5 V4.4" stroke="#4a82c6" stroke-width="0.8" fill="none"/><path d="M5.1 0.2 V3.8" stroke="#4a82c6" stroke-width="1"/><path d="M3.4 1.6 L5 0.4" stroke="#7ea6d8" stroke-width="0.6"/></svg>
<svg style="left:305.70px;top:339.71px" width="8" height="8"><rect x="0.45" y="0.45" width="5.8" height="6.2" rx="0.5" fill="#fff" stroke="#3d7bc6" stroke-width="0.9"/><rect x="0.9" y="0.9" width="2" height="2.3" fill="#0a4fa0"/><rect x="2" y="3.6" width="1.2" height="1.2" fill="#7fa8da"/><rect x="4" y="2" width="1" height="2.8" fill="#9dbde4"/><rect x="0.3" y="5.4" width="6.1" height="1.3" fill="#2c66b0"/></svg>
<div class="t" style="left:315.2px;transform-origin:0 50%;top:341.00px;font-size:6.9px;color:#32363a;transform:scaleX(0.9480);">1042</div>
<div class="t" style="left:340.4px;transform-origin:0 50%;top:341.00px;font-size:6.9px;color:#32363a;transform:scaleX(0.9480);">10300002</div>
<div class="t" style="left:373.8px;transform-origin:0 50%;top:341.00px;font-size:6.9px;color:#32363a;transform:scaleX(0.9480);">beamer &amp; more GmbH</div>
<div class="t" style="left:456.4px;transform-origin:0 50%;top:341.00px;font-size:6.9px;color:#32363a;transform:scaleX(0.9480);">4500002780</div>
<div class="t" style="left:497.8px;transform-origin:0 50%;top:341.00px;font-size:6.9px;color:#32363a;transform:scaleX(0.9480);">10.04.20...</div>
<div class="t" style="left:530.3000000000001px;transform-origin:0 50%;top:341.00px;font-size:6.9px;color:#32363a;transform:scaleX(0.9480);">30.04.20...</div>
<div class="t" style="left:563.9000000000001px;transform-origin:0 50%;top:341.00px;font-size:6.9px;color:#32363a;transform:scaleX(0.9480);">Veranstaltung</div>
<div class="t" style="left:537.9px;width:200px;text-align:right;transform-origin:100% 50%;top:341.00px;font-size:6.9px;color:#32363a;transform:scaleX(0.9480);">3.450,00</div>
<div class="t" style="left:744.0px;transform-origin:0 50%;top:341.00px;font-size:6.9px;color:#32363a;transform:scaleX(0.9480);">EUR</div>
<div class="t" style="left:761.8000000000001px;transform-origin:0 50%;top:341.00px;font-size:6.9px;color:#32363a;transform:scaleX(0.9480);">Dietrich, Andreas (WEB: DIE...</div>
<div class="a" style="left:131.1px;top:349.35px;width:718.30px;height:11.875px;background:#f3f3f3;border-bottom:1px solid #e7e7e7"></div>
<div class="a" style="left:131.1px;top:349.35px;width:12.5px;height:11.875px;background:#f4f4f4;border-bottom:1px solid #ebebeb"></div>
<div class="a" style="left:133.30px;top:352.05px;width:6.9px;height:6.5px;background:#fbfdff;border:0.8px solid #a3a9bb;border-radius:1.2px"></div>
<div class="a" style="left:288.80px;top:349.35px;width:16.20px;height:11.875px;background:#ebebeb;border-bottom:1px solid #e4e4e4"></div>
<div class="t" style="left:-18.19999999999999px;width:200px;text-align:right;transform-origin:100% 50%;top:353.00px;font-size:6.9px;color:#32363a;transform:scaleX(0.9480);">11605</div>
<div class="g" style="left:188.10px;top:352.79px;width:5.4px;height:4.9px"></div>
<div class="g" style="left:209.70px;top:352.79px;width:5.4px;height:4.9px"></div>
<svg style="left:266.80px;top:351.89px" width="8" height="8"><path d="M1.3 6.9 L6.8 1.4" stroke="#5089cb" stroke-width="2.1" stroke-linecap="round"/><path d="M1.6 6.6 L6.6 1.6" stroke="#a9c6ea" stroke-width="0.45"/><circle cx="1.3" cy="6.9" r="0.75" fill="#1d5eae"/></svg>
<svg style="left:280.40px;top:351.69px" width="7" height="8"><path d="M2.8 1.5 H0.6 V7.3 H5.5 V4.4" stroke="#4a82c6" stroke-width="0.8" fill="none"/><path d="M5.1 0.2 V3.8" stroke="#4a82c6" stroke-width="1"/><path d="M3.4 1.6 L5 0.4" stroke="#7ea6d8" stroke-width="0.6"/></svg>
<svg style="left:305.70px;top:351.59px" width="8" height="8"><rect x="0.45" y="0.45" width="5.8" height="6.2" rx="0.5" fill="#fff" stroke="#3d7bc6" stroke-width="0.9"/><rect x="0.9" y="0.9" width="2" height="2.3" fill="#0a4fa0"/><rect x="2" y="3.6" width="1.2" height="1.2" fill="#7fa8da"/><rect x="4" y="2" width="1" height="2.8" fill="#9dbde4"/><rect x="0.3" y="5.4" width="6.1" height="1.3" fill="#2c66b0"/></svg>
<div class="t" style="left:315.2px;transform-origin:0 50%;top:353.00px;font-size:6.9px;color:#32363a;transform:scaleX(0.9480);">1040</div>
<div class="t" style="left:340.4px;transform-origin:0 50%;top:353.00px;font-size:6.9px;color:#32363a;transform:scaleX(0.9480);">1000156</div>
<div class="t" style="left:373.8px;transform-origin:0 50%;top:353.00px;font-size:6.9px;color:#32363a;transform:scaleX(0.9480);">Wucato</div>
<div class="t" style="left:456.4px;transform-origin:0 50%;top:353.00px;font-size:6.9px;color:#32363a;transform:scaleX(0.9480);">4500002777</div>
<div class="t" style="left:497.8px;transform-origin:0 50%;top:353.00px;font-size:6.9px;color:#32363a;transform:scaleX(0.9480);">09.04.20...</div>
<div class="t" style="left:530.3000000000001px;transform-origin:0 50%;top:353.00px;font-size:6.9px;color:#32363a;transform:scaleX(0.9480);">16.04.20...</div>
<div class="t" style="left:563.9000000000001px;transform-origin:0 50%;top:353.00px;font-size:6.9px;color:#32363a;transform:scaleX(0.9480);">Veranstltung</div>
<div class="t" style="left:537.9px;width:200px;text-align:right;transform-origin:100% 50%;top:353.00px;font-size:6.9px;color:#32363a;transform:scaleX(0.9480);">25,70</div>
<div class="t" style="left:744.0px;transform-origin:0 50%;top:353.00px;font-size:6.9px;color:#32363a;transform:scaleX(0.9480);">EUR</div>
<div class="t" style="left:761.8000000000001px;transform-origin:0 50%;top:353.00px;font-size:6.9px;color:#32363a;transform:scaleX(0.9480);">Dietrich, Andreas (WEB: DIE...</div>
<div class="a" style="left:131.1px;top:361.23px;width:718.30px;height:11.875px;background:#ebebeb;border-bottom:1px solid #e7e7e7"></div>
<div class="a" style="left:131.1px;top:361.23px;width:12.5px;height:11.875px;background:#f4f4f4;border-bottom:1px solid #ebebeb"></div>
<div class="a" style="left:133.30px;top:363.93px;width:6.9px;height:6.5px;background:#fbfdff;border:0.8px solid #a3a9bb;border-radius:1.2px"></div>
<div class="a" style="left:288.80px;top:361.23px;width:16.20px;height:11.875px;background:#ebebeb;border-bottom:1px solid #e4e4e4"></div>
<div class="t" style="left:-18.19999999999999px;width:200px;text-align:right;transform-origin:100% 50%;top:365.00px;font-size:6.9px;color:#32363a;transform:scaleX(0.9480);">11277</div>
<div class="g" style="left:188.10px;top:364.66px;width:5.4px;height:4.9px"></div>
<div class="g" style="left:209.70px;top:364.66px;width:5.4px;height:4.9px"></div>
<svg style="left:266.80px;top:363.76px" width="8" height="8"><path d="M1.3 6.9 L6.8 1.4" stroke="#5089cb" stroke-width="2.1" stroke-linecap="round"/><path d="M1.6 6.6 L6.6 1.6" stroke="#a9c6ea" stroke-width="0.45"/><circle cx="1.3" cy="6.9" r="0.75" fill="#1d5eae"/></svg>
<svg style="left:280.40px;top:363.56px" width="7" height="8"><path d="M2.8 1.5 H0.6 V7.3 H5.5 V4.4" stroke="#4a82c6" stroke-width="0.8" fill="none"/><path d="M5.1 0.2 V3.8" stroke="#4a82c6" stroke-width="1"/><path d="M3.4 1.6 L5 0.4" stroke="#7ea6d8" stroke-width="0.6"/></svg>
<svg style="left:305.70px;top:363.46px" width="8" height="8"><rect x="0.45" y="0.45" width="5.8" height="6.2" rx="0.5" fill="#fff" stroke="#3d7bc6" stroke-width="0.9"/><rect x="0.9" y="0.9" width="2" height="2.3" fill="#0a4fa0"/><rect x="2" y="3.6" width="1.2" height="1.2" fill="#7fa8da"/><rect x="4" y="2" width="1" height="2.8" fill="#9dbde4"/><rect x="0.3" y="5.4" width="6.1" height="1.3" fill="#2c66b0"/></svg>
<div class="t" style="left:315.2px;transform-origin:0 50%;top:365.00px;font-size:6.9px;color:#32363a;transform:scaleX(0.9480);">1030</div>
<div class="t" style="left:340.4px;transform-origin:0 50%;top:365.00px;font-size:6.9px;color:#32363a;transform:scaleX(0.9480);">10300002</div>
<div class="t" style="left:373.8px;transform-origin:0 50%;top:365.00px;font-size:6.9px;color:#32363a;transform:scaleX(0.9480);">beamer &amp; more GmbH</div>
<div class="t" style="left:530.3000000000001px;transform-origin:0 50%;top:365.00px;font-size:6.9px;color:#32363a;transform:scaleX(0.9480);">21.03.20...</div>
<div class="t" style="left:563.9000000000001px;transform-origin:0 50%;top:365.00px;font-size:6.9px;color:#32363a;transform:scaleX(0.9480);">Scheibwaren</div>
<div class="t" style="left:537.9px;width:200px;text-align:right;transform-origin:100% 50%;top:365.00px;font-size:6.9px;color:#32363a;transform:scaleX(0.9480);">3.478,65</div>
<div class="t" style="left:744.0px;transform-origin:0 50%;top:365.00px;font-size:6.9px;color:#32363a;transform:scaleX(0.9480);">EUR</div>
<div class="t" style="left:761.8000000000001px;transform-origin:0 50%;top:365.00px;font-size:6.9px;color:#32363a;transform:scaleX(0.9480);">Dietrich, Andreas (WEB: DIE...</div>
<div class="a" style="left:131.1px;top:373.10px;width:718.30px;height:11.875px;background:#f3f3f3;border-bottom:1px solid #e7e7e7"></div>
<div class="a" style="left:131.1px;top:373.10px;width:12.5px;height:11.875px;background:#f4f4f4;border-bottom:1px solid #ebebeb"></div>
<div class="a" style="left:133.30px;top:375.80px;width:6.9px;height:6.5px;background:#fbfdff;border:0.8px solid #a3a9bb;border-radius:1.2px"></div>
<div class="a" style="left:288.80px;top:373.10px;width:16.20px;height:11.875px;background:#ebebeb;border-bottom:1px solid #e4e4e4"></div>
<div class="t" style="left:-18.19999999999999px;width:200px;text-align:right;transform-origin:100% 50%;top:377.00px;font-size:6.9px;color:#32363a;transform:scaleX(0.9480);">6361</div>
<div class="g" style="left:188.10px;top:376.54px;width:5.4px;height:4.9px"></div>
<div class="g" style="left:209.70px;top:376.54px;width:5.4px;height:4.9px"></div>
<div class="g" style="left:231.80px;top:376.54px;width:5.4px;height:4.9px"></div>
<svg style="left:245.00px;top:375.74px" width="8" height="8"><rect x="0.3" y="1.9" width="7.2" height="3.5" rx="1" fill="#4a82c6"/><rect x="0.9" y="0.5" width="3" height="1.9" fill="#1d5eae"/><rect x="4.3" y="1" width="2.2" height="1.3" fill="#9fc0e6"/><path d="M1 3.6 H6.6" stroke="#b9d0ee" stroke-width="0.5"/><circle cx="2" cy="6" r="1.05" fill="#1d5eae"/><circle cx="5.7" cy="6" r="1.05" fill="#1d5eae"/></svg>
<svg style="left:256.40px;top:375.34px" width="8" height="8"><rect x="3.3" y="0.5" width="3.4" height="6.4" stroke="#7ea6d8" stroke-width="0.7" fill="#eef4fb"/><path d="M4.2 1.6 H5.8 M4.9 2.2 V5.4 M4.2 5.8 H5.8" stroke="#3f78c0" stroke-width="0.6"/><rect x="0.4" y="5.2" width="1.8" height="1.8" fill="#1d5eae"/></svg>
<svg style="left:266.80px;top:375.64px" width="8" height="8"><path d="M1.3 6.9 L6.8 1.4" stroke="#5089cb" stroke-width="2.1" stroke-linecap="round"/><path d="M1.6 6.6 L6.6 1.6" stroke="#a9c6ea" stroke-width="0.45"/><circle cx="1.3" cy="6.9" r="0.75" fill="#1d5eae"/></svg>
<svg style="left:280.40px;top:375.44px" width="7" height="8"><path d="M2.8 1.5 H0.6 V7.3 H5.5 V4.4" stroke="#4a82c6" stroke-width="0.8" fill="none"/><path d="M5.1 0.2 V3.8" stroke="#4a82c6" stroke-width="1"/><path d="M3.4 1.6 L5 0.4" stroke="#7ea6d8" stroke-width="0.6"/></svg>
<svg style="left:305.70px;top:375.34px" width="8" height="8"><rect x="0.45" y="0.45" width="5.8" height="6.2" rx="0.5" fill="#fff" stroke="#3d7bc6" stroke-width="0.9"/><rect x="0.9" y="0.9" width="2" height="2.3" fill="#0a4fa0"/><rect x="2" y="3.6" width="1.2" height="1.2" fill="#7fa8da"/><rect x="4" y="2" width="1" height="2.8" fill="#9dbde4"/><rect x="0.3" y="5.4" width="6.1" height="1.3" fill="#2c66b0"/></svg>
<div class="t" style="left:315.2px;transform-origin:0 50%;top:377.00px;font-size:6.9px;color:#32363a;transform:scaleX(0.9480);">714</div>
<div class="t" style="left:340.4px;transform-origin:0 50%;top:377.00px;font-size:6.9px;color:#32363a;transform:scaleX(0.9480);">10300002</div>
<div class="t" style="left:373.8px;transform-origin:0 50%;top:377.00px;font-size:6.9px;color:#32363a;transform:scaleX(0.9480);">beamer &amp; more GmbH</div>
<div class="t" style="left:456.4px;transform-origin:0 50%;top:377.00px;font-size:6.9px;color:#32363a;transform:scaleX(0.9480);">4500001631</div>
<div class="t" style="left:497.8px;transform-origin:0 50%;top:377.00px;font-size:6.9px;color:#32363a;transform:scaleX(0.9480);">28.02.20...</div>
<div class="t" style="left:530.3000000000001px;transform-origin:0 50%;top:377.00px;font-size:6.9px;color:#32363a;transform:scaleX(0.9480);">15.03.20...</div>
<div class="t" style="left:563.9000000000001px;transform-origin:0 50%;top:377.00px;font-size:6.9px;color:#32363a;transform:scaleX(0.9480);">Videokabel</div>
<div class="t" style="left:537.9px;width:200px;text-align:right;transform-origin:100% 50%;top:377.00px;font-size:6.9px;color:#32363a;transform:scaleX(0.9480);">155,00</div>
<div class="t" style="left:744.0px;transform-origin:0 50%;top:377.00px;font-size:6.9px;color:#32363a;transform:scaleX(0.9480);">EUR</div>
<div class="t" style="left:761.8000000000001px;transform-origin:0 50%;top:377.00px;font-size:6.9px;color:#32363a;transform:scaleX(0.9480);">Dietrich, Andreas (WEB: DIE...</div>
<div class="a" style="left:131.1px;top:384.98px;width:718.30px;height:11.875px;background:#ebebeb;border-bottom:1px solid #e7e7e7"></div>
<div class="a" style="left:131.1px;top:384.98px;width:12.5px;height:11.875px;background:#f4f4f4;border-bottom:1px solid #ebebeb"></div>
<div class="a" style="left:133.30px;top:387.68px;width:6.9px;height:6.5px;background:#fbfdff;border:0.8px solid #a3a9bb;border-radius:1.2px"></div>
<div class="a" style="left:288.80px;top:384.98px;width:16.20px;height:11.875px;background:#ebebeb;border-bottom:1px solid #e4e4e4"></div>
<div class="t" style="left:-18.19999999999999px;width:200px;text-align:right;transform-origin:100% 50%;top:388.00px;font-size:6.9px;color:#32363a;transform:scaleX(0.9480);">1657</div>
<div class="g" style="left:188.10px;top:388.41px;width:5.4px;height:4.9px"></div>
<div class="g" style="left:209.70px;top:388.41px;width:5.4px;height:4.9px"></div>
<div class="g" style="left:231.80px;top:388.41px;width:5.4px;height:4.9px"></div>
<svg style="left:245.00px;top:387.61px" width="8" height="8"><rect x="0.3" y="1.9" width="7.2" height="3.5" rx="1" fill="#4a82c6"/><rect x="0.9" y="0.5" width="3" height="1.9" fill="#1d5eae"/><rect x="4.3" y="1" width="2.2" height="1.3" fill="#9fc0e6"/><path d="M1 3.6 H6.6" stroke="#b9d0ee" stroke-width="0.5"/><circle cx="2" cy="6" r="1.05" fill="#1d5eae"/><circle cx="5.7" cy="6" r="1.05" fill="#1d5eae"/></svg>
<div class="g" style="left:257.30px;top:388.41px;width:5.4px;height:4.9px"></div>
<svg style="left:280.40px;top:387.31px" width="7" height="8"><path d="M2.8 1.5 H0.6 V7.3 H5.5 V4.4" stroke="#4a82c6" stroke-width="0.8" fill="none"/><path d="M5.1 0.2 V3.8" stroke="#4a82c6" stroke-width="1"/><path d="M3.4 1.6 L5 0.4" stroke="#7ea6d8" stroke-width="0.6"/></svg>
<svg style="left:305.70px;top:387.21px" width="8" height="8"><rect x="0.45" y="0.45" width="5.8" height="6.2" rx="0.5" fill="#fff" stroke="#3d7bc6" stroke-width="0.9"/><rect x="0.9" y="0.9" width="2" height="2.3" fill="#0a4fa0"/><rect x="2" y="3.6" width="1.2" height="1.2" fill="#7fa8da"/><rect x="4" y="2" width="1" height="2.8" fill="#9dbde4"/><rect x="0.3" y="5.4" width="6.1" height="1.3" fill="#2c66b0"/></svg>
<div class="t" style="left:315.2px;transform-origin:0 50%;top:388.00px;font-size:6.9px;color:#32363a;transform:scaleX(0.9480);">216</div>
<div class="t" style="left:340.4px;transform-origin:0 50%;top:388.00px;font-size:6.9px;color:#32363a;transform:scaleX(0.9480);">10300003</div>
<div class="t" style="left:373.8px;transform-origin:0 50%;top:388.00px;font-size:6.9px;color:#32363a;transform:scaleX(0.9480);">printgroup GmbH &amp; Co. KG</div>
<div class="t" style="left:456.4px;transform-origin:0 50%;top:388.00px;font-size:6.9px;color:#32363a;transform:scaleX(0.9480);">4500000546</div>
<div class="t" style="left:497.8px;transform-origin:0 50%;top:388.00px;font-size:6.9px;color:#32363a;transform:scaleX(0.9480);">01.09.20...</div>
<div class="t" style="left:530.3000000000001px;transform-origin:0 50%;top:388.00px;font-size:6.9px;color:#32363a;transform:scaleX(0.9480);">23.09.20...</div>
<div class="t" style="left:563.9000000000001px;transform-origin:0 50%;top:388.00px;font-size:6.9px;color:#32363a;transform:scaleX(0.9480);">Vertriebsmaterial</div>
<div class="t" style="left:537.9px;width:200px;text-align:right;transform-origin:100% 50%;top:388.00px;font-size:6.9px;color:#32363a;transform:scaleX(0.9480);">7,50</div>
<div class="t" style="left:744.0px;transform-origin:0 50%;top:388.00px;font-size:6.9px;color:#32363a;transform:scaleX(0.9480);">EUR</div>
<div class="t" style="left:761.8000000000001px;transform-origin:0 50%;top:388.00px;font-size:6.9px;color:#32363a;transform:scaleX(0.9480);">Dietrich, Andreas (WEB: DIE...</div>
<div class="a" style="left:131.1px;top:396.85px;width:718.30px;height:11.875px;background:#f3f3f3;border-bottom:1px solid #e7e7e7"></div>
<div class="a" style="left:131.1px;top:396.85px;width:12.5px;height:11.875px;background:#f4f4f4;border-bottom:1px solid #ebebeb"></div>
<div class="a" style="left:133.30px;top:399.55px;width:6.9px;height:6.5px;background:#fbfdff;border:0.8px solid #a3a9bb;border-radius:1.2px"></div>
<div class="a" style="left:288.80px;top:396.85px;width:16.20px;height:11.875px;background:#ebebeb;border-bottom:1px solid #e4e4e4"></div>
<div class="t" style="left:-18.19999999999999px;width:200px;text-align:right;transform-origin:100% 50%;top:400.00px;font-size:6.9px;color:#32363a;transform:scaleX(0.9480);">1655</div>
<div class="g" style="left:188.10px;top:400.29px;width:5.4px;height:4.9px"></div>
<div class="g" style="left:209.70px;top:400.29px;width:5.4px;height:4.9px"></div>
<svg style="left:231.00px;top:399.39px" width="8" height="8"><circle cx="3.5" cy="3.5" r="3.1" fill="#fff" stroke="#2d6bbb" stroke-width="0.65"/><path d="M3.5 3.5 V0.6 A2.9 2.9 0 0 0 0.6 3.5 Z M3.5 3.5 V6.4 A2.9 2.9 0 0 0 6.4 3.5 Z" fill="#0a4fa0"/></svg>
<svg style="left:245.00px;top:399.49px" width="8" height="8"><rect x="0.3" y="1.9" width="7.2" height="3.5" rx="1" fill="#4a82c6"/><rect x="0.9" y="0.5" width="3" height="1.9" fill="#1d5eae"/><rect x="4.3" y="1" width="2.2" height="1.3" fill="#9fc0e6"/><path d="M1 3.6 H6.6" stroke="#b9d0ee" stroke-width="0.5"/><circle cx="2" cy="6" r="1.05" fill="#1d5eae"/><circle cx="5.7" cy="6" r="1.05" fill="#1d5eae"/></svg>
<svg style="left:305.70px;top:399.09px" width="8" height="8"><rect x="0.45" y="0.45" width="5.8" height="6.2" rx="0.5" fill="#fff" stroke="#3d7bc6" stroke-width="0.9"/><rect x="0.9" y="0.9" width="2" height="2.3" fill="#0a4fa0"/><rect x="2" y="3.6" width="1.2" height="1.2" fill="#7fa8da"/><rect x="4" y="2" width="1" height="2.8" fill="#9dbde4"/><rect x="0.3" y="5.4" width="6.1" height="1.3" fill="#2c66b0"/></svg>
<div class="t" style="left:315.2px;transform-origin:0 50%;top:400.00px;font-size:6.9px;color:#32363a;transform:scaleX(0.9480);">215</div>
<div class="t" style="left:340.4px;transform-origin:0 50%;top:400.00px;font-size:6.9px;color:#32363a;transform:scaleX(0.9480);">1000025</div>
<div class="t" style="left:373.8px;transform-origin:0 50%;top:400.00px;font-size:6.9px;color:#32363a;transform:scaleX(0.9480);">Conrad Electronic SE</div>
<div class="t" style="left:456.4px;transform-origin:0 50%;top:400.00px;font-size:6.9px;color:#32363a;transform:scaleX(0.9480);">4500000545</div>
<div class="t" style="left:497.8px;transform-origin:0 50%;top:400.00px;font-size:6.9px;color:#32363a;transform:scaleX(0.9480);">01.09.20...</div>
<div class="t" style="left:530.3000000000001px;transform-origin:0 50%;top:400.00px;font-size:6.9px;color:#32363a;transform:scaleX(0.9480);">08.09.20...</div>
<div class="t" style="left:563.9000000000001px;transform-origin:0 50%;top:400.00px;font-size:6.9px;color:#32363a;transform:scaleX(0.9480);">Neomounts by Newstar Wandschiene Passend</div>
<div class="t" style="left:537.9px;width:200px;text-align:right;transform-origin:100% 50%;top:400.00px;font-size:6.9px;color:#32363a;transform:scaleX(0.9480);">117,64</div>
<div class="t" style="left:744.0px;transform-origin:0 50%;top:400.00px;font-size:6.9px;color:#32363a;transform:scaleX(0.9480);">EUR</div>
<div class="t" style="left:761.8000000000001px;transform-origin:0 50%;top:400.00px;font-size:6.9px;color:#32363a;transform:scaleX(0.9480);">Dietrich, Andreas (WEB: DIE...</div>
<div class="a" style="left:131.1px;top:408.73px;width:718.30px;height:11.875px;background:#ebebeb;border-bottom:1px solid #e7e7e7"></div>
<div class="a" style="left:131.1px;top:408.73px;width:12.5px;height:11.875px;background:#f4f4f4;border-bottom:1px solid #ebebeb"></div>
<div class="a" style="left:133.30px;top:411.43px;width:6.9px;height:6.5px;background:#fbfdff;border:0.8px solid #a3a9bb;border-radius:1.2px"></div>
<div class="a" style="left:288.80px;top:408.73px;width:16.20px;height:11.875px;background:#ebebeb;border-bottom:1px solid #e4e4e4"></div>
<div class="t" style="left:-18.19999999999999px;width:200px;text-align:right;transform-origin:100% 50%;top:412.00px;font-size:6.9px;color:#32363a;transform:scaleX(0.9480);">1653</div>
<svg style="left:187.30px;top:411.26px" width="8" height="8"><circle cx="3.5" cy="3.5" r="3.1" fill="#fff" stroke="#2d6bbb" stroke-width="0.65"/><path d="M3.5 3.5 V0.6 A2.9 2.9 0 0 0 0.6 3.5 Z M3.5 3.5 V6.4 A2.9 2.9 0 0 0 6.4 3.5 Z" fill="#0a4fa0"/></svg>
<svg style="left:208.90px;top:411.26px" width="8" height="8"><circle cx="3.5" cy="3.5" r="3.1" fill="#fff" stroke="#2d6bbb" stroke-width="0.65"/><path d="M3.5 3.5 V0.6 A2.9 2.9 0 0 0 0.6 3.5 Z M3.5 3.5 V6.4 A2.9 2.9 0 0 0 6.4 3.5 Z" fill="#0a4fa0"/></svg>
<svg style="left:266.80px;top:411.26px" width="8" height="8"><path d="M1.3 6.9 L6.8 1.4" stroke="#5089cb" stroke-width="2.1" stroke-linecap="round"/><path d="M1.6 6.6 L6.6 1.6" stroke="#a9c6ea" stroke-width="0.45"/><circle cx="1.3" cy="6.9" r="0.75" fill="#1d5eae"/></svg>
<svg style="left:280.40px;top:411.06px" width="7" height="8"><path d="M2.8 1.5 H0.6 V7.3 H5.5 V4.4" stroke="#4a82c6" stroke-width="0.8" fill="none"/><path d="M5.1 0.2 V3.8" stroke="#4a82c6" stroke-width="1"/><path d="M3.4 1.6 L5 0.4" stroke="#7ea6d8" stroke-width="0.6"/></svg>
<svg style="left:305.70px;top:410.96px" width="8" height="8"><rect x="0.45" y="0.45" width="5.8" height="6.2" rx="0.5" fill="#fff" stroke="#3d7bc6" stroke-width="0.9"/><rect x="0.9" y="0.9" width="2" height="2.3" fill="#0a4fa0"/><rect x="2" y="3.6" width="1.2" height="1.2" fill="#7fa8da"/><rect x="4" y="2" width="1" height="2.8" fill="#9dbde4"/><rect x="0.3" y="5.4" width="6.1" height="1.3" fill="#2c66b0"/></svg>
<div class="t" style="left:315.2px;transform-origin:0 50%;top:412.00px;font-size:6.9px;color:#32363a;transform:scaleX(0.9480);">214</div>
<div class="t" style="left:340.4px;transform-origin:0 50%;top:412.00px;font-size:6.9px;color:#32363a;transform:scaleX(0.9480);">10300002</div>
<div class="t" style="left:373.8px;transform-origin:0 50%;top:412.00px;font-size:6.9px;color:#32363a;transform:scaleX(0.9480);">beamer &amp; more GmbH</div>
<div class="t" style="left:530.3000000000001px;transform-origin:0 50%;top:412.00px;font-size:6.9px;color:#32363a;transform:scaleX(0.9480);">23.09.20...</div>
<div class="t" style="left:563.9000000000001px;transform-origin:0 50%;top:412.00px;font-size:6.9px;color:#32363a;transform:scaleX(0.9480);">IT-Austattung</div>
<div class="t" style="left:537.9px;width:200px;text-align:right;transform-origin:100% 50%;top:412.00px;font-size:6.9px;color:#32363a;transform:scaleX(0.9480);">3.450,00</div>
<div class="t" style="left:744.0px;transform-origin:0 50%;top:412.00px;font-size:6.9px;color:#32363a;transform:scaleX(0.9480);">EUR</div>
<div class="t" style="left:761.8000000000001px;transform-origin:0 50%;top:412.00px;font-size:6.9px;color:#32363a;transform:scaleX(0.9480);">Dietrich, Andreas (WEB: DIE...</div>
<div class="a" style="left:131.1px;top:420.60px;width:718.30px;height:11.875px;background:#f3f3f3;border-bottom:1px solid #e7e7e7"></div>
<div class="a" style="left:131.1px;top:420.60px;width:12.5px;height:11.875px;background:#f4f4f4;border-bottom:1px solid #ebebeb"></div>
<div class="a" style="left:133.30px;top:423.30px;width:6.9px;height:6.5px;background:#fbfdff;border:0.8px solid #a3a9bb;border-radius:1.2px"></div>
<div class="a" style="left:288.80px;top:420.60px;width:16.20px;height:11.875px;background:#ebebeb;border-bottom:1px solid #e4e4e4"></div>
<div class="t" style="left:-18.19999999999999px;width:200px;text-align:right;transform-origin:100% 50%;top:424.00px;font-size:6.9px;color:#32363a;transform:scaleX(0.9480);">890</div>
<div class="g" style="left:188.10px;top:424.04px;width:5.4px;height:4.9px"></div>
<div class="g" style="left:209.70px;top:424.04px;width:5.4px;height:4.9px"></div>
<div class="g" style="left:231.80px;top:424.04px;width:5.4px;height:4.9px"></div>
<svg style="left:245.00px;top:423.24px" width="8" height="8"><rect x="0.3" y="1.9" width="7.2" height="3.5" rx="1" fill="#4a82c6"/><rect x="0.9" y="0.5" width="3" height="1.9" fill="#1d5eae"/><rect x="4.3" y="1" width="2.2" height="1.3" fill="#9fc0e6"/><path d="M1 3.6 H6.6" stroke="#b9d0ee" stroke-width="0.5"/><circle cx="2" cy="6" r="1.05" fill="#1d5eae"/><circle cx="5.7" cy="6" r="1.05" fill="#1d5eae"/></svg>
<div class="g" style="left:257.30px;top:424.04px;width:5.4px;height:4.9px"></div>
<svg style="left:305.70px;top:422.84px" width="8" height="8"><rect x="0.45" y="0.45" width="5.8" height="6.2" rx="0.5" fill="#fff" stroke="#3d7bc6" stroke-width="0.9"/><rect x="0.9" y="0.9" width="2" height="2.3" fill="#0a4fa0"/><rect x="2" y="3.6" width="1.2" height="1.2" fill="#7fa8da"/><rect x="4" y="2" width="1" height="2.8" fill="#9dbde4"/><rect x="0.3" y="5.4" width="6.1" height="1.3" fill="#2c66b0"/></svg>
<div class="t" style="left:315.2px;transform-origin:0 50%;top:424.00px;font-size:6.9px;color:#32363a;transform:scaleX(0.9480);">124</div>
<div class="t" style="left:340.4px;transform-origin:0 50%;top:424.00px;font-size:6.9px;color:#32363a;transform:scaleX(0.9480);">10300003</div>
<div class="t" style="left:373.8px;transform-origin:0 50%;top:424.00px;font-size:6.9px;color:#32363a;transform:scaleX(0.9480);">printgroup GmbH &amp; Co. KG</div>
<div class="t" style="left:456.4px;transform-origin:0 50%;top:424.00px;font-size:6.9px;color:#32363a;transform:scaleX(0.9480);">4500000386</div>
<div class="t" style="left:497.8px;transform-origin:0 50%;top:424.00px;font-size:6.9px;color:#32363a;transform:scaleX(0.9480);">31.05.20...</div>
<div class="t" style="left:530.3000000000001px;transform-origin:0 50%;top:424.00px;font-size:6.9px;color:#32363a;transform:scaleX(0.9480);">17.06.20...</div>
<div class="t" style="left:563.9000000000001px;transform-origin:0 50%;top:424.00px;font-size:6.9px;color:#32363a;transform:scaleX(0.9480);">Kaffeetassen</div>
<div class="t" style="left:537.9px;width:200px;text-align:right;transform-origin:100% 50%;top:424.00px;font-size:6.9px;color:#32363a;transform:scaleX(0.9480);">132,00</div>
<div class="t" style="left:744.0px;transform-origin:0 50%;top:424.00px;font-size:6.9px;color:#32363a;transform:scaleX(0.9480);">EUR</div>
<div class="t" style="left:761.8000000000001px;transform-origin:0 50%;top:424.00px;font-size:6.9px;color:#32363a;transform:scaleX(0.9480);">Dietrich, Andreas (WEB: DIE...</div>
<div class="a" style="left:131.1px;top:432.48px;width:718.30px;height:11.875px;background:#ebebeb;border-bottom:1px solid #e7e7e7"></div>
<div class="a" style="left:131.1px;top:432.48px;width:12.5px;height:11.875px;background:#f4f4f4;border-bottom:1px solid #ebebeb"></div>
<div class="a" style="left:133.30px;top:435.18px;width:6.9px;height:6.5px;background:#fbfdff;border:0.8px solid #a3a9bb;border-radius:1.2px"></div>
<div class="a" style="left:288.80px;top:432.48px;width:16.20px;height:11.875px;background:#ebebeb;border-bottom:1px solid #e4e4e4"></div>
<div class="t" style="left:-18.19999999999999px;width:200px;text-align:right;transform-origin:100% 50%;top:436.00px;font-size:6.9px;color:#32363a;transform:scaleX(0.9480);">889</div>
<svg style="left:187.30px;top:435.01px" width="8" height="8"><circle cx="3.5" cy="3.5" r="3.1" fill="#fff" stroke="#2d6bbb" stroke-width="0.65"/><path d="M3.5 3.5 V0.6 A2.9 2.9 0 0 0 0.6 3.5 Z M3.5 3.5 V6.4 A2.9 2.9 0 0 0 6.4 3.5 Z" fill="#0a4fa0"/></svg>
<div class="a" style="left:209.70px;top:435.61px;width:5.4px;height:5.4px;border-radius:50%;background:#d01010"></div>
<svg style="left:266.80px;top:435.01px" width="8" height="8"><path d="M1.3 6.9 L6.8 1.4" stroke="#5089cb" stroke-width="2.1" stroke-linecap="round"/><path d="M1.6 6.6 L6.6 1.6" stroke="#a9c6ea" stroke-width="0.45"/><circle cx="1.3" cy="6.9" r="0.75" fill="#1d5eae"/></svg>
<svg style="left:280.40px;top:434.81px" width="7" height="8"><path d="M2.8 1.5 H0.6 V7.3 H5.5 V4.4" stroke="#4a82c6" stroke-width="0.8" fill="none"/><path d="M5.1 0.2 V3.8" stroke="#4a82c6" stroke-width="1"/><path d="M3.4 1.6 L5 0.4" stroke="#7ea6d8" stroke-width="0.6"/></svg>
<svg style="left:305.70px;top:434.71px" width="8" height="8"><rect x="0.45" y="0.45" width="5.8" height="6.2" rx="0.5" fill="#fff" stroke="#3d7bc6" stroke-width="0.9"/><rect x="0.9" y="0.9" width="2" height="2.3" fill="#0a4fa0"/><rect x="2" y="3.6" width="1.2" height="1.2" fill="#7fa8da"/><rect x="4" y="2" width="1" height="2.8" fill="#9dbde4"/><rect x="0.3" y="5.4" width="6.1" height="1.3" fill="#2c66b0"/></svg>
<div class="t" style="left:315.2px;transform-origin:0 50%;top:436.00px;font-size:6.9px;color:#32363a;transform:scaleX(0.9480);">123</div>
<div class="t" style="left:340.4px;transform-origin:0 50%;top:436.00px;font-size:6.9px;color:#32363a;transform:scaleX(0.9480);">10300002</div>
<div class="t" style="left:373.8px;transform-origin:0 50%;top:436.00px;font-size:6.9px;color:#32363a;transform:scaleX(0.9480);">beamer &amp; more GmbH</div>
<div class="t" style="left:530.3000000000001px;transform-origin:0 50%;top:436.00px;font-size:6.9px;color:#32363a;transform:scaleX(0.9480);">01.07.20...</div>
<div class="t" style="left:563.9000000000001px;transform-origin:0 50%;top:436.00px;font-size:6.9px;color:#32363a;transform:scaleX(0.9480);">Ausstattung Büro</div>
<div class="t" style="left:537.9px;width:200px;text-align:right;transform-origin:100% 50%;top:436.00px;font-size:6.9px;color:#32363a;transform:scaleX(0.9480);">3.450,00</div>
<div class="t" style="left:744.0px;transform-origin:0 50%;top:436.00px;font-size:6.9px;color:#32363a;transform:scaleX(0.9480);">EUR</div>
<div class="t" style="left:761.8000000000001px;transform-origin:0 50%;top:436.00px;font-size:6.9px;color:#32363a;transform:scaleX(0.9480);">Dietrich, Andreas (WEB: DIE...</div>
<div class="a" style="left:131.1px;top:444.35px;width:718.30px;height:11.875px;background:#f3f3f3;border-bottom:1px solid #e7e7e7"></div>
<div class="a" style="left:131.1px;top:444.35px;width:12.5px;height:11.875px;background:#f4f4f4;border-bottom:1px solid #ebebeb"></div>
<div class="a" style="left:133.30px;top:447.05px;width:6.9px;height:6.5px;background:#fbfdff;border:0.8px solid #a3a9bb;border-radius:1.2px"></div>
<div class="a" style="left:288.80px;top:444.35px;width:16.20px;height:11.875px;background:#ebebeb;border-bottom:1px solid #e4e4e4"></div>
<div class="t" style="left:-18.19999999999999px;width:200px;text-align:right;transform-origin:100% 50%;top:448.00px;font-size:6.9px;color:#32363a;transform:scaleX(0.9480);">888</div>
<svg style="left:187.30px;top:446.89px" width="8" height="8"><circle cx="3.5" cy="3.5" r="3.1" fill="#fff" stroke="#2d6bbb" stroke-width="0.65"/><path d="M3.5 3.5 V0.6 A2.9 2.9 0 0 0 0.6 3.5 Z M3.5 3.5 V6.4 A2.9 2.9 0 0 0 6.4 3.5 Z" fill="#0a4fa0"/></svg>
<svg style="left:208.90px;top:446.89px" width="8" height="8"><circle cx="3.5" cy="3.5" r="3.1" fill="#fff" stroke="#2d6bbb" stroke-width="0.65"/><path d="M3.5 3.5 V0.6 A2.9 2.9 0 0 0 0.6 3.5 Z M3.5 3.5 V6.4 A2.9 2.9 0 0 0 6.4 3.5 Z" fill="#0a4fa0"/></svg>
<svg style="left:305.70px;top:446.59px" width="8" height="8"><rect x="0.45" y="0.45" width="5.8" height="6.2" rx="0.5" fill="#fff" stroke="#3d7bc6" stroke-width="0.9"/><rect x="0.9" y="0.9" width="2" height="2.3" fill="#0a4fa0"/><rect x="2" y="3.6" width="1.2" height="1.2" fill="#7fa8da"/><rect x="4" y="2" width="1" height="2.8" fill="#9dbde4"/><rect x="0.3" y="5.4" width="6.1" height="1.3" fill="#2c66b0"/></svg>
<div class="t" style="left:315.2px;transform-origin:0 50%;top:448.00px;font-size:6.9px;color:#32363a;transform:scaleX(0.9480);">122</div>
<div class="t" style="left:340.4px;transform-origin:0 50%;top:448.00px;font-size:6.9px;color:#32363a;transform:scaleX(0.9480);">10300003</div>
<div class="t" style="left:373.8px;transform-origin:0 50%;top:448.00px;font-size:6.9px;color:#32363a;transform:scaleX(0.9480);">printgroup GmbH &amp; Co. KG</div>
<div class="t" style="left:530.3000000000001px;transform-origin:0 50%;top:448.00px;font-size:6.9px;color:#32363a;transform:scaleX(0.9480);">30.06.20...</div>
<div class="t" style="left:563.9000000000001px;transform-origin:0 50%;top:448.00px;font-size:6.9px;color:#32363a;transform:scaleX(0.9480);">Gefahrgut</div>
<div class="t" style="left:537.9px;width:200px;text-align:right;transform-origin:100% 50%;top:448.00px;font-size:6.9px;color:#32363a;transform:scaleX(0.9480);">825,00</div>
<div class="t" style="left:744.0px;transform-origin:0 50%;top:448.00px;font-size:6.9px;color:#32363a;transform:scaleX(0.9480);">EUR</div>
<div class="t" style="left:761.8000000000001px;transform-origin:0 50%;top:448.00px;font-size:6.9px;color:#32363a;transform:scaleX(0.9480);">Dietrich, Andreas (WEB: DIE...</div>
</div>
<div class="a" style="left:183.70px;top:311.6px;width:1px;height:139.70px;background:#e2e2e2"></div>
<div class="a" style="left:196.00px;top:311.6px;width:1px;height:139.70px;background:#e2e2e2"></div>
<div class="a" style="left:226.00px;top:311.6px;width:1px;height:139.70px;background:#e2e2e2"></div>
<div class="a" style="left:240.30px;top:311.6px;width:1px;height:139.70px;background:#e2e2e2"></div>
<div class="a" style="left:254.70px;top:311.6px;width:1px;height:139.70px;background:#e2e2e2"></div>
<div class="a" style="left:262.80px;top:311.6px;width:1px;height:139.70px;background:#e2e2e2"></div>
<div class="a" style="left:276.00px;top:311.6px;width:1px;height:139.70px;background:#e2e2e2"></div>
<div class="a" style="left:288.50px;top:311.6px;width:1px;height:139.70px;background:#e2e2e2"></div>
<div class="a" style="left:304.70px;top:311.6px;width:1px;height:139.70px;background:#e2e2e2"></div>
<div class="a" style="left:312.70px;top:311.6px;width:1px;height:139.70px;background:#e2e2e2"></div>
<div class="a" style="left:337.90px;top:311.6px;width:1px;height:139.70px;background:#e2e2e2"></div>
<div class="a" style="left:371.30px;top:311.6px;width:1px;height:139.70px;background:#e2e2e2"></div>
<div class="a" style="left:453.90px;top:311.6px;width:1px;height:139.70px;background:#e2e2e2"></div>
<div class="a" style="left:495.30px;top:311.6px;width:1px;height:139.70px;background:#e2e2e2"></div>
<div class="a" style="left:527.80px;top:311.6px;width:1px;height:139.70px;background:#e2e2e2"></div>
<div class="a" style="left:561.40px;top:311.6px;width:1px;height:139.70px;background:#e2e2e2"></div>
<div class="a" style="left:699.40px;top:311.6px;width:1px;height:139.70px;background:#e2e2e2"></div>
<div class="a" style="left:741.50px;top:311.6px;width:1px;height:139.70px;background:#e2e2e2"></div>
<div class="a" style="left:759.30px;top:311.6px;width:1px;height:139.70px;background:#e2e2e2"></div>
<div class="a" style="left:143.2px;top:311.6px;width:1px;height:139.70px;background:#a2a4a6"></div>
<div class="t" style="left:-18.19999999999999px;width:200px;text-align:right;transform-origin:100% 50%;top:315.00px;font-size:6.9px;color:#32363a;transform:scaleX(0.9256);">History ID</div>
<div class="t" style="left:186.2px;transform-origin:0 50%;top:315.00px;font-size:6.9px;color:#32363a;transform:scaleX(0.8812);">P+</div>
<div class="t" style="left:198.5px;transform-origin:0 50%;top:315.00px;font-size:6.9px;color:#32363a;transform:scaleX(0.9521);">Approval</div>
<div class="t" style="left:228.5px;transform-origin:0 50%;top:315.00px;font-size:6.9px;color:#32363a;transform:scaleX(0.9571);">OC</div>
<div class="t" style="left:242.79999999999998px;transform-origin:0 50%;top:315.00px;font-size:6.9px;color:#32363a;transform:scaleX(0.9764);">GR</div>
<div class="t" style="left:257.2px;transform-origin:0 50%;top:315.00px;font-size:6.9px;color:#32363a;transform:scaleX(0.8870);">In</div>
<div class="t" style="left:265.3px;transform-origin:0 50%;top:315.00px;font-size:6.9px;color:#32363a;transform:scaleX(1.0099);">Co</div>
<div class="t" style="left:278.5px;transform-origin:0 50%;top:315.00px;font-size:6.9px;color:#32363a;transform:scaleX(0.9671);">AA</div>
<div class="t" style="left:291.0px;transform-origin:0 50%;top:315.00px;font-size:6.9px;color:#32363a;transform:scaleX(0.8783);">Inq.</div>
<div class="t" style="left:307.2px;transform-origin:0 50%;top:315.00px;font-size:6.9px;color:#32363a;transform:scaleX(0.9300);">*</div>
<div class="t" style="left:315.2px;transform-origin:0 50%;top:315.00px;font-size:6.9px;color:#32363a;transform:scaleX(0.9101);">RCR ID</div>
<div class="t" style="left:340.4px;transform-origin:0 50%;top:315.00px;font-size:6.9px;color:#32363a;transform:scaleX(0.9053);">Suppl.No.</div>
<div class="t" style="left:373.8px;transform-origin:0 50%;top:315.00px;font-size:6.9px;color:#32363a;transform:scaleX(0.8906);">Name 1</div>
<div class="t" style="left:456.4px;transform-origin:0 50%;top:315.00px;font-size:6.9px;color:#32363a;transform:scaleX(0.9300);">PO</div>
<div class="t" style="left:497.8px;transform-origin:0 50%;top:315.00px;font-size:6.9px;color:#32363a;transform:scaleX(0.9229);">PO Date</div>
<div class="t" style="left:530.3000000000001px;transform-origin:0 50%;top:315.00px;font-size:6.9px;color:#32363a;transform:scaleX(0.8919);">Deliv. Da...</div>
<div class="t" style="left:563.9000000000001px;transform-origin:0 50%;top:315.00px;font-size:6.9px;color:#32363a;transform:scaleX(0.9481);">Descriptn</div>
<div class="t" style="left:539.5999999999999px;width:200px;text-align:right;transform-origin:100% 50%;top:315.00px;font-size:6.9px;color:#32363a;transform:scaleX(0.9751);">Total</div>
<div class="t" style="left:744.0px;transform-origin:0 50%;top:315.00px;font-size:6.9px;color:#32363a;transform:scaleX(0.9314);">Crcy</div>
<div class="t" style="left:761.8000000000001px;transform-origin:0 50%;top:315.00px;font-size:6.9px;color:#32363a;transform:scaleX(0.9381);">Requester name</div>
<svg style="left:146.8px;top:311.8px" width="4" height="3"><path d="M0 0 H3.8 L1.9 2.6 Z" fill="#d01010"/></svg>
<svg style="left:133.5px;top:315.2px" width="8" height="8"><rect x="0.2" y="0.2" width="3" height="3" rx="0.5" fill="#1d5eae"/><rect x="4" y="0.2" width="3" height="3" rx="0.5" fill="#3f78c0"/><rect x="0.2" y="4" width="3" height="3" rx="0.5" fill="#1d5eae"/><path d="M4.2 5.2 L5.5 6.6 L7.4 4.2" stroke="#3f78c0" stroke-width="0.8" fill="none"/></svg>
<svg style="left:702.8px;top:315.3px" width="4" height="5"><path d="M3.2 0.5 H0.5 L2 2.3 L0.5 4.1 H3.2" stroke="#0a55a8" stroke-width="0.8" fill="none"/></svg>
<div class="a" style="left:849.4px;top:325.6px;width:7.6px;height:125.70px;background:#fff"></div>
<div class="a" style="left:851.4px;top:356.5px;width:5px;height:62.2px;background:#9a9a9a"></div>
<svg style="left:851px;top:327.5px" width="5" height="10"><path d="M0.8 2.8 L2.5 1.2 L4.2 2.8 M0.8 6.5 L2.5 8.1 L4.2 6.5" stroke="#2f6fbf" stroke-width="0.7" fill="none"/></svg>
<svg style="left:851px;top:440.5px" width="5" height="10"><path d="M0.8 2.8 L2.5 1.2 L4.2 2.8 M0.8 6.5 L2.5 8.1 L4.2 6.5" stroke="#2f6fbf" stroke-width="0.7" fill="none"/></svg>
<div class="a" style="left:131px;top:451.3px;width:726px;height:7.3px;background:#f2f2f2;border-top:1px solid #e5e5e5"></div>
<div class="a" style="left:143.5px;top:451.6px;width:706px;height:6.4px;background:#fff"></div>
<div class="a" style="left:156.4px;top:451.6px;width:298.6px;height:5.6px;background:#9a9a9a"></div>
<svg style="left:145.5px;top:452.1px" width="10" height="5"><path d="M2.6 0.6 L1 2.3 L2.6 4 M6.6 0.6 L8.2 2.3 L6.6 4" stroke="#2f6fbf" stroke-width="0.8" fill="none"/></svg>
<svg style="left:837px;top:452.1px" width="10" height="5"><path d="M2.6 0.6 L1 2.3 L2.6 4 M6.6 0.6 L8.2 2.3 L6.6 4" stroke="#2f6fbf" stroke-width="0.8" fill="none"/></svg>
<div class="a" style="left:488.7px;top:459.8px;width:7.5px;height:1.2px;background:repeating-linear-gradient(90deg,#3a7cc8 0 1.2px,transparent 1.2px 2px)"></div>
<div class="a" style="left:3.5px;top:472.9px;width:873.2px;height:18.8px;background:#fff;border:1px solid #c9c9c9;border-radius:2.5px"></div>
<svg style="left:872px;top:488px" width="7" height="6"><path d="M6 1 V5.5 H1.5 Z" fill="#8fb0d8"/></svg>
</body></html>
